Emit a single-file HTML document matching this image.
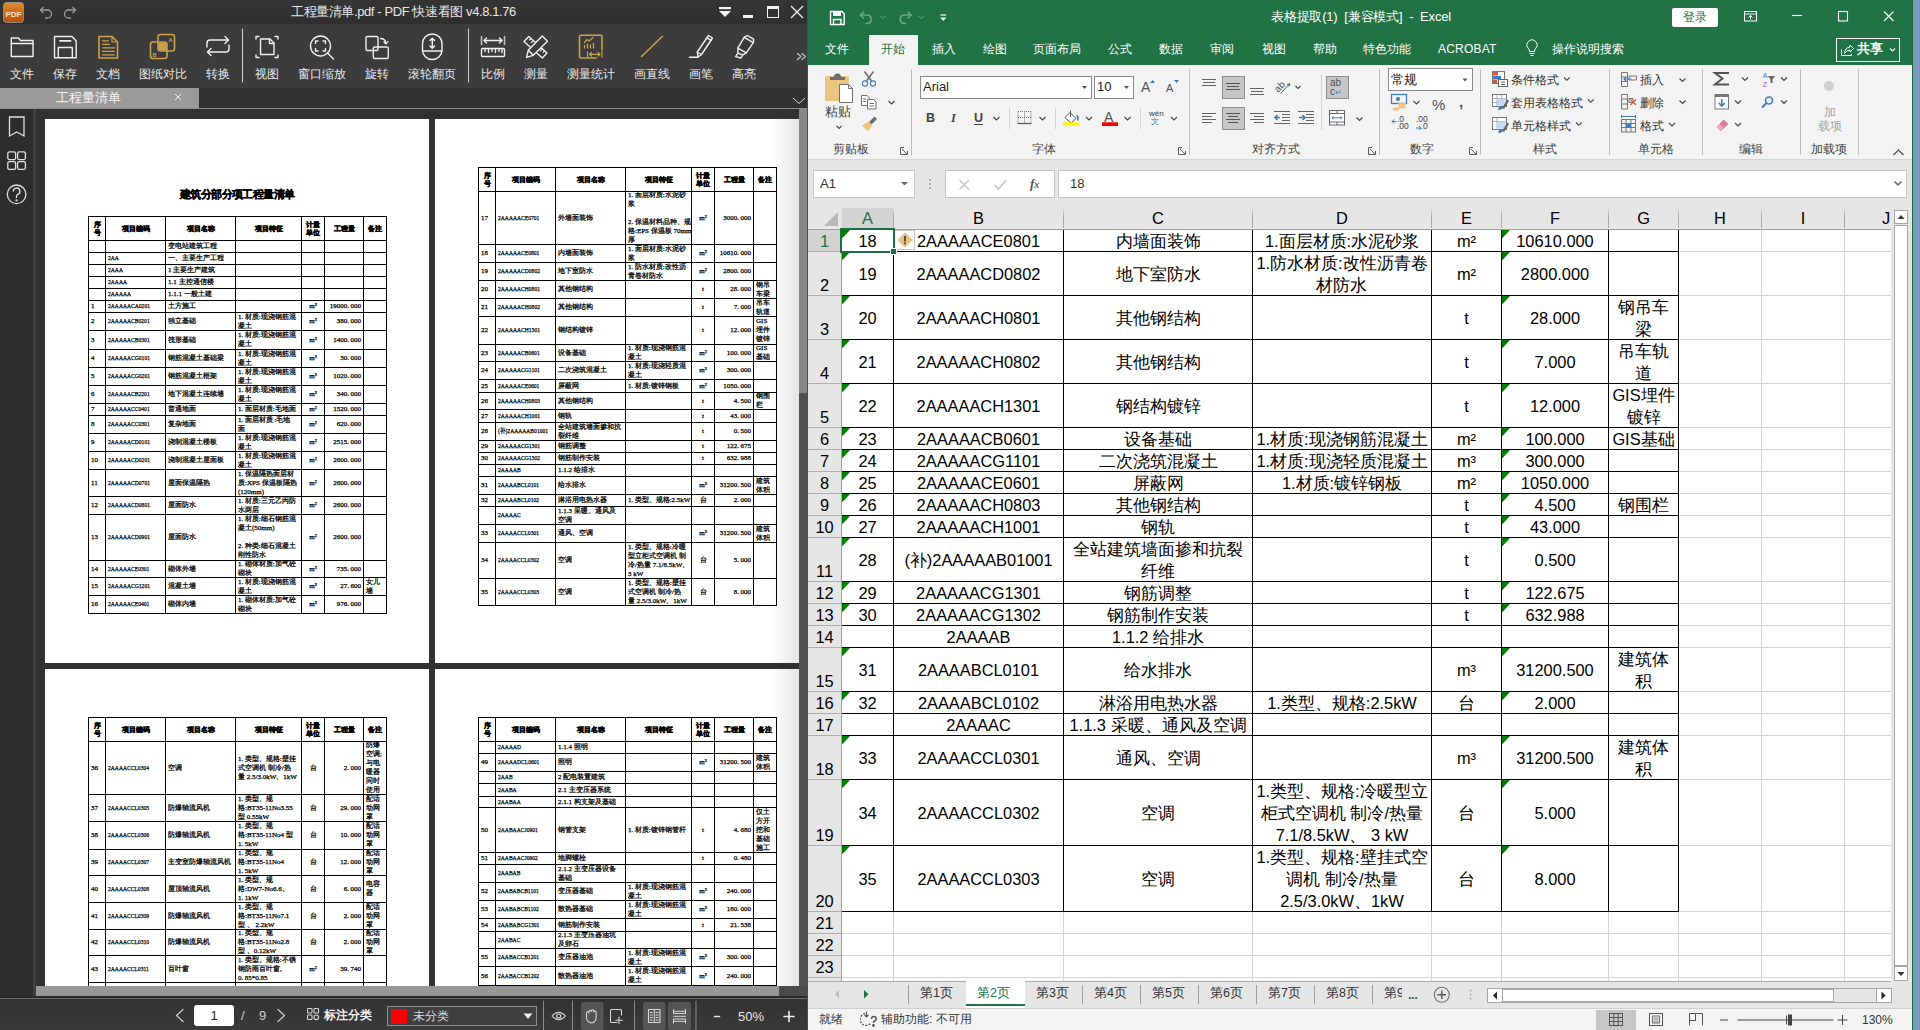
<!DOCTYPE html>
<html><head><meta charset="utf-8">
<style>
*{box-sizing:border-box;margin:0;padding:0}
html,body{width:1920px;height:1030px;overflow:hidden;background:#2f2f2f;font-family:"Liberation Sans",sans-serif}
.a{position:absolute}
.t{position:absolute;white-space:nowrap;line-height:1}
/* left window */
#pdf{position:absolute;left:0;top:0;width:807px;height:1030px;background:#313131;overflow:hidden}
#xl{position:absolute;left:807px;top:0;width:1113px;height:1030px;background:#f3f3f3;overflow:hidden}
.hd{font-size:16.4px;text-align:center;line-height:21px}
.rh{font-size:16.4px;text-align:center;line-height:21px}
.lbl{top:68px;font-size:12px;color:#e8e8e8}
.tab{top:43px;font-size:12px;color:#fff}
.rl{font-size:12px;color:#444}
.rb{font-size:12px;color:#333}
.stab{top:987px;font-size:12.5px;color:#333}
.ph{display:flex;align-items:center;justify-content:center;text-align:center;font-family:"Liberation Serif",serif;font-size:7px;line-height:8px;font-weight:bold;color:#000;white-space:nowrap;overflow:hidden}
.pc{display:flex;align-items:center;font-family:"Liberation Serif",serif;font-size:7px;line-height:9px;color:#000;white-space:nowrap;overflow:hidden;padding:0 2px}
.pc span{-webkit-text-stroke:0.25px #000}
.ph span{-webkit-text-stroke:0.4px #000}
.nx span{display:inline-block;transform:scaleX(.8);transform-origin:left center}
.nx.r span{transform-origin:right center}
.pc.l{justify-content:flex-start;text-align:left}
.pc.c{justify-content:center;text-align:center}
.pc.r{justify-content:flex-end;text-align:right}
.z{font-style:normal;font-size:17.2px}
.cell{display:flex;align-items:center;justify-content:center;text-align:center;font-size:16.4px;line-height:22px;color:#000;overflow:hidden;white-space:nowrap}
</style></head><body>
<div id="pdf">
  <div class="a" style="left:0;top:0;width:807px;height:24px;background:linear-gradient(#353535,#303030)"></div>
  <div class="a" style="left:0;top:24px;width:807px;height:64px;background:#3c3c3c"></div>
  <div class="a" style="left:0;top:88px;width:807px;height:20px;background:#313131"></div>
  <div class="a" style="left:0;top:88px;width:199px;height:20px;background:#9a9a9a"></div>
  <div class="a" style="left:0;top:108px;width:807px;height:1px;background:#8c8c8c"></div>
  <div class="a" style="left:0;top:109px;width:33px;height:890px;background:#2d2d2d"></div>
  <div class="a" style="left:33px;top:109px;width:3px;height:887px;background:#3f3f3f"></div>
  <!-- pages -->
  <div class="a" style="left:0;top:0;width:807px;height:1030px;clip-path:inset(109px 8px 44px 36px)">
  <div class="a" style="left:45px;top:119px;width:384px;height:544px;background:#fff"></div>
  <div class="a" style="left:435px;top:119px;width:364px;height:544px;background:#fff"></div>
  <div class="a" style="left:45px;top:669px;width:384px;height:317px;background:#fff"></div>
  <div class="a" style="left:435px;top:669px;width:364px;height:317px;background:#fff"></div>
<div class="a" style="left:88px;top:216px;width:1px;height:398px;background:#000"></div>
<div class="a" style="left:105px;top:216px;width:1px;height:398px;background:#000"></div>
<div class="a" style="left:165px;top:216px;width:1px;height:398px;background:#000"></div>
<div class="a" style="left:235px;top:216px;width:1px;height:398px;background:#000"></div>
<div class="a" style="left:301px;top:216px;width:1px;height:398px;background:#000"></div>
<div class="a" style="left:324px;top:216px;width:1px;height:398px;background:#000"></div>
<div class="a" style="left:363px;top:216px;width:1px;height:398px;background:#000"></div>
<div class="a" style="left:386px;top:216px;width:1px;height:398px;background:#000"></div>
<div class="a" style="left:88px;top:216px;width:299px;height:1px;background:#000"></div>
<div class="a" style="left:88px;top:240px;width:299px;height:1px;background:#000"></div>
<div class="a" style="left:88px;top:252px;width:299px;height:1px;background:#000"></div>
<div class="a" style="left:88px;top:264px;width:299px;height:1px;background:#000"></div>
<div class="a" style="left:88px;top:276px;width:299px;height:1px;background:#000"></div>
<div class="a" style="left:88px;top:288px;width:299px;height:1px;background:#000"></div>
<div class="a" style="left:88px;top:300px;width:299px;height:1px;background:#000"></div>
<div class="a" style="left:88px;top:312px;width:299px;height:1px;background:#000"></div>
<div class="a" style="left:88px;top:330px;width:299px;height:1px;background:#000"></div>
<div class="a" style="left:88px;top:349px;width:299px;height:1px;background:#000"></div>
<div class="a" style="left:88px;top:367px;width:299px;height:1px;background:#000"></div>
<div class="a" style="left:88px;top:385px;width:299px;height:1px;background:#000"></div>
<div class="a" style="left:88px;top:403px;width:299px;height:1px;background:#000"></div>
<div class="a" style="left:88px;top:415px;width:299px;height:1px;background:#000"></div>
<div class="a" style="left:88px;top:433px;width:299px;height:1px;background:#000"></div>
<div class="a" style="left:88px;top:451px;width:299px;height:1px;background:#000"></div>
<div class="a" style="left:88px;top:469px;width:299px;height:1px;background:#000"></div>
<div class="a" style="left:88px;top:496px;width:299px;height:1px;background:#000"></div>
<div class="a" style="left:88px;top:514px;width:299px;height:1px;background:#000"></div>
<div class="a" style="left:88px;top:560px;width:299px;height:1px;background:#000"></div>
<div class="a" style="left:88px;top:577px;width:299px;height:1px;background:#000"></div>
<div class="a" style="left:88px;top:595px;width:299px;height:1px;background:#000"></div>
<div class="a" style="left:88px;top:613px;width:299px;height:1px;background:#000"></div>
<div class="a" style="left:88px;top:216px;width:299px;height:1px;background:#000"></div>
<div class="a ph" style="left:89px;top:217px;width:16px;height:23px"><span>序<br>号</span></div>
<div class="a ph" style="left:106px;top:217px;width:59px;height:23px"><span>项目编码</span></div>
<div class="a ph" style="left:166px;top:217px;width:69px;height:23px"><span>项目名称</span></div>
<div class="a ph" style="left:236px;top:217px;width:65px;height:23px"><span>项目特征</span></div>
<div class="a ph" style="left:302px;top:217px;width:22px;height:23px"><span>计量<br>单位</span></div>
<div class="a ph" style="left:325px;top:217px;width:38px;height:23px"><span>工程量</span></div>
<div class="a ph" style="left:364px;top:217px;width:22px;height:23px"><span>备注</span></div>
<div class="a pc l" style="left:166px;top:241px;width:69px;height:11px"><span>变电站建筑工程</span></div>
<div class="a pc l nx" style="left:106px;top:253px;width:59px;height:11px"><span>2AA</span></div>
<div class="a pc l" style="left:166px;top:253px;width:69px;height:11px"><span>一、主要生产工程</span></div>
<div class="a pc l nx" style="left:106px;top:265px;width:59px;height:11px"><span>2AAA</span></div>
<div class="a pc l" style="left:166px;top:265px;width:69px;height:11px"><span>1 主要生产建筑</span></div>
<div class="a pc l nx" style="left:106px;top:277px;width:59px;height:11px"><span>2AAAA</span></div>
<div class="a pc l" style="left:166px;top:277px;width:69px;height:11px"><span>1.1 主控通信楼</span></div>
<div class="a pc l nx" style="left:106px;top:289px;width:59px;height:11px"><span>2AAAAA</span></div>
<div class="a pc l" style="left:166px;top:289px;width:69px;height:11px"><span>1.1.1 一般土建</span></div>
<div class="a pc l" style="left:89px;top:301px;width:16px;height:11px"><span>1</span></div>
<div class="a pc l nx" style="left:106px;top:301px;width:59px;height:11px"><span>2AAAAACA0201</span></div>
<div class="a pc l" style="left:166px;top:301px;width:69px;height:11px"><span>土方施工</span></div>
<div class="a pc c" style="left:302px;top:301px;width:22px;height:11px"><span>m³</span></div>
<div class="a pc r" style="left:325px;top:301px;width:38px;height:11px"><span>19000.&thinsp;000</span></div>
<div class="a pc l" style="left:89px;top:313px;width:16px;height:17px"><span>2</span></div>
<div class="a pc l nx" style="left:106px;top:313px;width:59px;height:17px"><span>2AAAAACB0201</span></div>
<div class="a pc l" style="left:166px;top:313px;width:69px;height:17px"><span>独立基础</span></div>
<div class="a pc l" style="left:236px;top:313px;width:65px;height:17px"><span>1.&thinsp;材质:现浇钢筋混<br>凝土</span></div>
<div class="a pc c" style="left:302px;top:313px;width:22px;height:17px"><span>m³</span></div>
<div class="a pc r" style="left:325px;top:313px;width:38px;height:17px"><span>380.&thinsp;000</span></div>
<div class="a pc l" style="left:89px;top:331px;width:16px;height:18px"><span>3</span></div>
<div class="a pc l nx" style="left:106px;top:331px;width:59px;height:18px"><span>2AAAAACB0301</span></div>
<div class="a pc l" style="left:166px;top:331px;width:69px;height:18px"><span>筏形基础</span></div>
<div class="a pc l" style="left:236px;top:331px;width:65px;height:18px"><span>1.&thinsp;材质:现浇钢筋混<br>凝土</span></div>
<div class="a pc c" style="left:302px;top:331px;width:22px;height:18px"><span>m³</span></div>
<div class="a pc r" style="left:325px;top:331px;width:38px;height:18px"><span>1400.&thinsp;000</span></div>
<div class="a pc l" style="left:89px;top:350px;width:16px;height:17px"><span>4</span></div>
<div class="a pc l nx" style="left:106px;top:350px;width:59px;height:17px"><span>2AAAAACG0101</span></div>
<div class="a pc l" style="left:166px;top:350px;width:69px;height:17px"><span>钢筋混凝土基础梁</span></div>
<div class="a pc l" style="left:236px;top:350px;width:65px;height:17px"><span>1.&thinsp;材质:现浇钢筋混<br>凝土</span></div>
<div class="a pc c" style="left:302px;top:350px;width:22px;height:17px"><span>m³</span></div>
<div class="a pc r" style="left:325px;top:350px;width:38px;height:17px"><span>30.&thinsp;000</span></div>
<div class="a pc l" style="left:89px;top:368px;width:16px;height:17px"><span>5</span></div>
<div class="a pc l nx" style="left:106px;top:368px;width:59px;height:17px"><span>2AAAAACG0201</span></div>
<div class="a pc l" style="left:166px;top:368px;width:69px;height:17px"><span>钢筋混凝土框架</span></div>
<div class="a pc l" style="left:236px;top:368px;width:65px;height:17px"><span>1.&thinsp;材质:现浇钢筋混<br>凝土</span></div>
<div class="a pc c" style="left:302px;top:368px;width:22px;height:17px"><span>m³</span></div>
<div class="a pc r" style="left:325px;top:368px;width:38px;height:17px"><span>1020.&thinsp;000</span></div>
<div class="a pc l" style="left:89px;top:386px;width:16px;height:17px"><span>6</span></div>
<div class="a pc l nx" style="left:106px;top:386px;width:59px;height:17px"><span>2AAAAACB2201</span></div>
<div class="a pc l" style="left:166px;top:386px;width:69px;height:17px"><span>地下混凝土连续墙</span></div>
<div class="a pc l" style="left:236px;top:386px;width:65px;height:17px"><span>1.&thinsp;材质:现浇钢筋混<br>凝土</span></div>
<div class="a pc c" style="left:302px;top:386px;width:22px;height:17px"><span>m³</span></div>
<div class="a pc r" style="left:325px;top:386px;width:38px;height:17px"><span>340.&thinsp;000</span></div>
<div class="a pc l" style="left:89px;top:404px;width:16px;height:11px"><span>7</span></div>
<div class="a pc l nx" style="left:106px;top:404px;width:59px;height:11px"><span>2AAAAACC0401</span></div>
<div class="a pc l" style="left:166px;top:404px;width:69px;height:11px"><span>普通地面</span></div>
<div class="a pc l" style="left:236px;top:404px;width:65px;height:11px"><span>1.&thinsp;面层材质:毛地面</span></div>
<div class="a pc c" style="left:302px;top:404px;width:22px;height:11px"><span>m²</span></div>
<div class="a pc r" style="left:325px;top:404px;width:38px;height:11px"><span>1520.&thinsp;000</span></div>
<div class="a pc l" style="left:89px;top:416px;width:16px;height:17px"><span>8</span></div>
<div class="a pc l nx" style="left:106px;top:416px;width:59px;height:17px"><span>2AAAAACC0301</span></div>
<div class="a pc l" style="left:166px;top:416px;width:69px;height:17px"><span>复杂地面</span></div>
<div class="a pc l" style="left:236px;top:416px;width:65px;height:17px"><span>1.&thinsp;面层材质 :毛地<br>面</span></div>
<div class="a pc c" style="left:302px;top:416px;width:22px;height:17px"><span>m²</span></div>
<div class="a pc r" style="left:325px;top:416px;width:38px;height:17px"><span>620.&thinsp;000</span></div>
<div class="a pc l" style="left:89px;top:434px;width:16px;height:17px"><span>9</span></div>
<div class="a pc l nx" style="left:106px;top:434px;width:59px;height:17px"><span>2AAAAACD0101</span></div>
<div class="a pc l" style="left:166px;top:434px;width:69px;height:17px"><span>浇制混凝土楼板</span></div>
<div class="a pc l" style="left:236px;top:434px;width:65px;height:17px"><span>1.&thinsp;材质:现浇钢筋混<br>凝土</span></div>
<div class="a pc c" style="left:302px;top:434px;width:22px;height:17px"><span>m²</span></div>
<div class="a pc r" style="left:325px;top:434px;width:38px;height:17px"><span>2515.&thinsp;000</span></div>
<div class="a pc l" style="left:89px;top:452px;width:16px;height:17px"><span>10</span></div>
<div class="a pc l nx" style="left:106px;top:452px;width:59px;height:17px"><span>2AAAAACD0201</span></div>
<div class="a pc l" style="left:166px;top:452px;width:69px;height:17px"><span>浇制混凝土屋面板</span></div>
<div class="a pc l" style="left:236px;top:452px;width:65px;height:17px"><span>1.&thinsp;材质:现浇钢筋混<br>凝土</span></div>
<div class="a pc c" style="left:302px;top:452px;width:22px;height:17px"><span>m²</span></div>
<div class="a pc r" style="left:325px;top:452px;width:38px;height:17px"><span>2600.&thinsp;000</span></div>
<div class="a pc l" style="left:89px;top:470px;width:16px;height:26px"><span>11</span></div>
<div class="a pc l nx" style="left:106px;top:470px;width:59px;height:26px"><span>2AAAAACD0701</span></div>
<div class="a pc l" style="left:166px;top:470px;width:69px;height:26px"><span>屋面保温隔热</span></div>
<div class="a pc l" style="left:236px;top:470px;width:65px;height:26px"><span>1.&thinsp;保温隔热面层材<br>质:XPS 保温板隔热<br>(120mm)</span></div>
<div class="a pc c" style="left:302px;top:470px;width:22px;height:26px"><span>m²</span></div>
<div class="a pc r" style="left:325px;top:470px;width:38px;height:26px"><span>2600.&thinsp;000</span></div>
<div class="a pc l" style="left:89px;top:497px;width:16px;height:17px"><span>12</span></div>
<div class="a pc l nx" style="left:106px;top:497px;width:59px;height:17px"><span>2AAAAACD0801</span></div>
<div class="a pc l" style="left:166px;top:497px;width:69px;height:17px"><span>屋面防水</span></div>
<div class="a pc l" style="left:236px;top:497px;width:65px;height:17px"><span>1.&thinsp;材质:三元乙丙防<br>水两层</span></div>
<div class="a pc c" style="left:302px;top:497px;width:22px;height:17px"><span>m²</span></div>
<div class="a pc r" style="left:325px;top:497px;width:38px;height:17px"><span>2600.&thinsp;000</span></div>
<div class="a pc l" style="left:89px;top:515px;width:16px;height:45px"><span>13</span></div>
<div class="a pc l nx" style="left:106px;top:515px;width:59px;height:45px"><span>2AAAAACD0901</span></div>
<div class="a pc l" style="left:166px;top:515px;width:69px;height:45px"><span>屋面防水</span></div>
<div class="a pc l" style="left:236px;top:515px;width:65px;height:45px"><span>1.&thinsp;材质:细石钢筋混<br>凝土(50mm)<br>&nbsp;<br>2.&thinsp;种类:细石混凝土<br>刚性防水</span></div>
<div class="a pc c" style="left:302px;top:515px;width:22px;height:45px"><span>m²</span></div>
<div class="a pc r" style="left:325px;top:515px;width:38px;height:45px"><span>2600.&thinsp;000</span></div>
<div class="a pc l" style="left:89px;top:561px;width:16px;height:16px"><span>14</span></div>
<div class="a pc l nx" style="left:106px;top:561px;width:59px;height:16px"><span>2AAAAACE0301</span></div>
<div class="a pc l" style="left:166px;top:561px;width:69px;height:16px"><span>砌体外墙</span></div>
<div class="a pc l" style="left:236px;top:561px;width:65px;height:16px"><span>1.&thinsp;砌体材质:加气砼<br>砌块</span></div>
<div class="a pc c" style="left:302px;top:561px;width:22px;height:16px"><span>m³</span></div>
<div class="a pc r" style="left:325px;top:561px;width:38px;height:16px"><span>735.&thinsp;000</span></div>
<div class="a pc l" style="left:89px;top:578px;width:16px;height:17px"><span>15</span></div>
<div class="a pc l nx" style="left:106px;top:578px;width:59px;height:17px"><span>2AAAAACG1201</span></div>
<div class="a pc l" style="left:166px;top:578px;width:69px;height:17px"><span>混凝土墙</span></div>
<div class="a pc l" style="left:236px;top:578px;width:65px;height:17px"><span>1.&thinsp;材质:现浇钢筋混<br>凝土</span></div>
<div class="a pc c" style="left:302px;top:578px;width:22px;height:17px"><span>m³</span></div>
<div class="a pc r" style="left:325px;top:578px;width:38px;height:17px"><span>27.&thinsp;600</span></div>
<div class="a pc l" style="left:364px;top:578px;width:22px;height:17px"><span>女儿<br>墙</span></div>
<div class="a pc l" style="left:89px;top:596px;width:16px;height:17px"><span>16</span></div>
<div class="a pc l nx" style="left:106px;top:596px;width:59px;height:17px"><span>2AAAAACE0401</span></div>
<div class="a pc l" style="left:166px;top:596px;width:69px;height:17px"><span>砌体内墙</span></div>
<div class="a pc l" style="left:236px;top:596px;width:65px;height:17px"><span>1.&thinsp;砌体材质:加气砼<br>砌块</span></div>
<div class="a pc c" style="left:302px;top:596px;width:22px;height:17px"><span>m³</span></div>
<div class="a pc r" style="left:325px;top:596px;width:38px;height:17px"><span>976.&thinsp;000</span></div>
<div class="t" style="left:180px;top:189px;font-size:10.5px;font-weight:bold;color:#000;letter-spacing:-0.6px;-webkit-text-stroke:0.3px #000">建筑分部分项工程量清单</div>
<div class="a" style="left:478px;top:167px;width:1px;height:439px;background:#000"></div>
<div class="a" style="left:495px;top:167px;width:1px;height:439px;background:#000"></div>
<div class="a" style="left:555px;top:167px;width:1px;height:439px;background:#000"></div>
<div class="a" style="left:625px;top:167px;width:1px;height:439px;background:#000"></div>
<div class="a" style="left:691px;top:167px;width:1px;height:439px;background:#000"></div>
<div class="a" style="left:714px;top:167px;width:1px;height:439px;background:#000"></div>
<div class="a" style="left:753px;top:167px;width:1px;height:439px;background:#000"></div>
<div class="a" style="left:776px;top:167px;width:1px;height:439px;background:#000"></div>
<div class="a" style="left:478px;top:167px;width:299px;height:1px;background:#000"></div>
<div class="a" style="left:478px;top:191px;width:299px;height:1px;background:#000"></div>
<div class="a" style="left:478px;top:244px;width:299px;height:1px;background:#000"></div>
<div class="a" style="left:478px;top:262px;width:299px;height:1px;background:#000"></div>
<div class="a" style="left:478px;top:280px;width:299px;height:1px;background:#000"></div>
<div class="a" style="left:478px;top:298px;width:299px;height:1px;background:#000"></div>
<div class="a" style="left:478px;top:316px;width:299px;height:1px;background:#000"></div>
<div class="a" style="left:478px;top:344px;width:299px;height:1px;background:#000"></div>
<div class="a" style="left:478px;top:361px;width:299px;height:1px;background:#000"></div>
<div class="a" style="left:478px;top:379px;width:299px;height:1px;background:#000"></div>
<div class="a" style="left:478px;top:392px;width:299px;height:1px;background:#000"></div>
<div class="a" style="left:478px;top:409px;width:299px;height:1px;background:#000"></div>
<div class="a" style="left:478px;top:422px;width:299px;height:1px;background:#000"></div>
<div class="a" style="left:478px;top:440px;width:299px;height:1px;background:#000"></div>
<div class="a" style="left:478px;top:452px;width:299px;height:1px;background:#000"></div>
<div class="a" style="left:478px;top:464px;width:299px;height:1px;background:#000"></div>
<div class="a" style="left:478px;top:476px;width:299px;height:1px;background:#000"></div>
<div class="a" style="left:478px;top:494px;width:299px;height:1px;background:#000"></div>
<div class="a" style="left:478px;top:506px;width:299px;height:1px;background:#000"></div>
<div class="a" style="left:478px;top:524px;width:299px;height:1px;background:#000"></div>
<div class="a" style="left:478px;top:542px;width:299px;height:1px;background:#000"></div>
<div class="a" style="left:478px;top:578px;width:299px;height:1px;background:#000"></div>
<div class="a" style="left:478px;top:605px;width:299px;height:1px;background:#000"></div>
<div class="a" style="left:478px;top:167px;width:299px;height:1px;background:#000"></div>
<div class="a ph" style="left:479px;top:168px;width:16px;height:23px"><span>序<br>号</span></div>
<div class="a ph" style="left:496px;top:168px;width:59px;height:23px"><span>项目编码</span></div>
<div class="a ph" style="left:556px;top:168px;width:69px;height:23px"><span>项目名称</span></div>
<div class="a ph" style="left:626px;top:168px;width:65px;height:23px"><span>项目特征</span></div>
<div class="a ph" style="left:692px;top:168px;width:22px;height:23px"><span>计量<br>单位</span></div>
<div class="a ph" style="left:715px;top:168px;width:38px;height:23px"><span>工程量</span></div>
<div class="a ph" style="left:754px;top:168px;width:22px;height:23px"><span>备注</span></div>
<div class="a pc l" style="left:479px;top:192px;width:16px;height:52px"><span>17</span></div>
<div class="a pc l nx" style="left:496px;top:192px;width:59px;height:52px"><span>2AAAAACE0701</span></div>
<div class="a pc l" style="left:556px;top:192px;width:69px;height:52px"><span>外墙面装饰</span></div>
<div class="a pc l" style="left:626px;top:192px;width:65px;height:52px"><span>1.&thinsp;面层材质:水泥砂<br>浆<br>&nbsp;<br>2.&thinsp;保温材料品种、规<br>格:EPS 保温板 70mm<br>厚</span></div>
<div class="a pc c" style="left:692px;top:192px;width:22px;height:52px"><span>m²</span></div>
<div class="a pc r" style="left:715px;top:192px;width:38px;height:52px"><span>3000.&thinsp;000</span></div>
<div class="a pc l" style="left:479px;top:245px;width:16px;height:17px"><span>18</span></div>
<div class="a pc l nx" style="left:496px;top:245px;width:59px;height:17px"><span>2AAAAACE0801</span></div>
<div class="a pc l" style="left:556px;top:245px;width:69px;height:17px"><span>内墙面装饰</span></div>
<div class="a pc l" style="left:626px;top:245px;width:65px;height:17px"><span>1.&thinsp;面层材质:水泥砂<br>浆</span></div>
<div class="a pc c" style="left:692px;top:245px;width:22px;height:17px"><span>m²</span></div>
<div class="a pc r" style="left:715px;top:245px;width:38px;height:17px"><span>10610.&thinsp;000</span></div>
<div class="a pc l" style="left:479px;top:263px;width:16px;height:17px"><span>19</span></div>
<div class="a pc l nx" style="left:496px;top:263px;width:59px;height:17px"><span>2AAAAACD0802</span></div>
<div class="a pc l" style="left:556px;top:263px;width:69px;height:17px"><span>地下室防水</span></div>
<div class="a pc l" style="left:626px;top:263px;width:65px;height:17px"><span>1.&thinsp;防水材质:改性沥<br>青卷材防水</span></div>
<div class="a pc c" style="left:692px;top:263px;width:22px;height:17px"><span>m²</span></div>
<div class="a pc r" style="left:715px;top:263px;width:38px;height:17px"><span>2800.&thinsp;000</span></div>
<div class="a pc l" style="left:479px;top:281px;width:16px;height:17px"><span>20</span></div>
<div class="a pc l nx" style="left:496px;top:281px;width:59px;height:17px"><span>2AAAAACH0801</span></div>
<div class="a pc l" style="left:556px;top:281px;width:69px;height:17px"><span>其他钢结构</span></div>
<div class="a pc c" style="left:692px;top:281px;width:22px;height:17px"><span>t</span></div>
<div class="a pc r" style="left:715px;top:281px;width:38px;height:17px"><span>28.&thinsp;000</span></div>
<div class="a pc l" style="left:754px;top:281px;width:22px;height:17px"><span>钢吊<br>车梁</span></div>
<div class="a pc l" style="left:479px;top:299px;width:16px;height:17px"><span>21</span></div>
<div class="a pc l nx" style="left:496px;top:299px;width:59px;height:17px"><span>2AAAAACH0802</span></div>
<div class="a pc l" style="left:556px;top:299px;width:69px;height:17px"><span>其他钢结构</span></div>
<div class="a pc c" style="left:692px;top:299px;width:22px;height:17px"><span>t</span></div>
<div class="a pc r" style="left:715px;top:299px;width:38px;height:17px"><span>7.&thinsp;000</span></div>
<div class="a pc l" style="left:754px;top:299px;width:22px;height:17px"><span>吊车<br>轨道</span></div>
<div class="a pc l" style="left:479px;top:317px;width:16px;height:27px"><span>22</span></div>
<div class="a pc l nx" style="left:496px;top:317px;width:59px;height:27px"><span>2AAAAACH1301</span></div>
<div class="a pc l" style="left:556px;top:317px;width:69px;height:27px"><span>钢结构镀锌</span></div>
<div class="a pc c" style="left:692px;top:317px;width:22px;height:27px"><span>t</span></div>
<div class="a pc r" style="left:715px;top:317px;width:38px;height:27px"><span>12.&thinsp;000</span></div>
<div class="a pc l" style="left:754px;top:317px;width:22px;height:27px"><span>GIS<br>埋件<br>镀锌</span></div>
<div class="a pc l" style="left:479px;top:345px;width:16px;height:16px"><span>23</span></div>
<div class="a pc l nx" style="left:496px;top:345px;width:59px;height:16px"><span>2AAAAACB0601</span></div>
<div class="a pc l" style="left:556px;top:345px;width:69px;height:16px"><span>设备基础</span></div>
<div class="a pc l" style="left:626px;top:345px;width:65px;height:16px"><span>1.&thinsp;材质:现浇钢筋混<br>凝土</span></div>
<div class="a pc c" style="left:692px;top:345px;width:22px;height:16px"><span>m²</span></div>
<div class="a pc r" style="left:715px;top:345px;width:38px;height:16px"><span>100.&thinsp;000</span></div>
<div class="a pc l" style="left:754px;top:345px;width:22px;height:16px"><span>GIS<br>基础</span></div>
<div class="a pc l" style="left:479px;top:362px;width:16px;height:17px"><span>24</span></div>
<div class="a pc l nx" style="left:496px;top:362px;width:59px;height:17px"><span>2AAAAACG1101</span></div>
<div class="a pc l" style="left:556px;top:362px;width:69px;height:17px"><span>二次浇筑混凝土</span></div>
<div class="a pc l" style="left:626px;top:362px;width:65px;height:17px"><span>1.&thinsp;材质:现浇轻质混<br>凝土</span></div>
<div class="a pc c" style="left:692px;top:362px;width:22px;height:17px"><span>m³</span></div>
<div class="a pc r" style="left:715px;top:362px;width:38px;height:17px"><span>300.&thinsp;000</span></div>
<div class="a pc l" style="left:479px;top:380px;width:16px;height:12px"><span>25</span></div>
<div class="a pc l nx" style="left:496px;top:380px;width:59px;height:12px"><span>2AAAAACE0601</span></div>
<div class="a pc l" style="left:556px;top:380px;width:69px;height:12px"><span>屏蔽网</span></div>
<div class="a pc l" style="left:626px;top:380px;width:65px;height:12px"><span>1.&thinsp;材质:镀锌钢板</span></div>
<div class="a pc c" style="left:692px;top:380px;width:22px;height:12px"><span>m²</span></div>
<div class="a pc r" style="left:715px;top:380px;width:38px;height:12px"><span>1050.&thinsp;000</span></div>
<div class="a pc l" style="left:479px;top:393px;width:16px;height:16px"><span>26</span></div>
<div class="a pc l nx" style="left:496px;top:393px;width:59px;height:16px"><span>2AAAAACH0803</span></div>
<div class="a pc l" style="left:556px;top:393px;width:69px;height:16px"><span>其他钢结构</span></div>
<div class="a pc c" style="left:692px;top:393px;width:22px;height:16px"><span>t</span></div>
<div class="a pc r" style="left:715px;top:393px;width:38px;height:16px"><span>4.&thinsp;500</span></div>
<div class="a pc l" style="left:754px;top:393px;width:22px;height:16px"><span>钢围<br>栏</span></div>
<div class="a pc l" style="left:479px;top:410px;width:16px;height:12px"><span>27</span></div>
<div class="a pc l nx" style="left:496px;top:410px;width:59px;height:12px"><span>2AAAAACH1001</span></div>
<div class="a pc l" style="left:556px;top:410px;width:69px;height:12px"><span>钢轨</span></div>
<div class="a pc c" style="left:692px;top:410px;width:22px;height:12px"><span>t</span></div>
<div class="a pc r" style="left:715px;top:410px;width:38px;height:12px"><span>43.&thinsp;000</span></div>
<div class="a pc l" style="left:479px;top:423px;width:16px;height:17px"><span>28</span></div>
<div class="a pc l nx" style="left:496px;top:423px;width:59px;height:17px"><span>(补)2AAAAAB01001</span></div>
<div class="a pc l" style="left:556px;top:423px;width:69px;height:17px"><span>全站建筑墙面掺和抗<br>裂纤维</span></div>
<div class="a pc c" style="left:692px;top:423px;width:22px;height:17px"><span>t</span></div>
<div class="a pc r" style="left:715px;top:423px;width:38px;height:17px"><span>0.&thinsp;500</span></div>
<div class="a pc l" style="left:479px;top:441px;width:16px;height:11px"><span>29</span></div>
<div class="a pc l nx" style="left:496px;top:441px;width:59px;height:11px"><span>2AAAAACG1301</span></div>
<div class="a pc l" style="left:556px;top:441px;width:69px;height:11px"><span>钢筋调整</span></div>
<div class="a pc c" style="left:692px;top:441px;width:22px;height:11px"><span>t</span></div>
<div class="a pc r" style="left:715px;top:441px;width:38px;height:11px"><span>122.&thinsp;675</span></div>
<div class="a pc l" style="left:479px;top:453px;width:16px;height:11px"><span>30</span></div>
<div class="a pc l nx" style="left:496px;top:453px;width:59px;height:11px"><span>2AAAAACG1302</span></div>
<div class="a pc l" style="left:556px;top:453px;width:69px;height:11px"><span>钢筋制作安装</span></div>
<div class="a pc c" style="left:692px;top:453px;width:22px;height:11px"><span>t</span></div>
<div class="a pc r" style="left:715px;top:453px;width:38px;height:11px"><span>632.&thinsp;988</span></div>
<div class="a pc l nx" style="left:496px;top:465px;width:59px;height:11px"><span>2AAAAB</span></div>
<div class="a pc l" style="left:556px;top:465px;width:69px;height:11px"><span>1.1.2 给排水</span></div>
<div class="a pc l" style="left:479px;top:477px;width:16px;height:17px"><span>31</span></div>
<div class="a pc l nx" style="left:496px;top:477px;width:59px;height:17px"><span>2AAAABCL0101</span></div>
<div class="a pc l" style="left:556px;top:477px;width:69px;height:17px"><span>给水排水</span></div>
<div class="a pc c" style="left:692px;top:477px;width:22px;height:17px"><span>m³</span></div>
<div class="a pc r" style="left:715px;top:477px;width:38px;height:17px"><span>31200.&thinsp;500</span></div>
<div class="a pc l" style="left:754px;top:477px;width:22px;height:17px"><span>建筑<br>体积</span></div>
<div class="a pc l" style="left:479px;top:495px;width:16px;height:11px"><span>32</span></div>
<div class="a pc l nx" style="left:496px;top:495px;width:59px;height:11px"><span>2AAAABCL0102</span></div>
<div class="a pc l" style="left:556px;top:495px;width:69px;height:11px"><span>淋浴用电热水器</span></div>
<div class="a pc l" style="left:626px;top:495px;width:65px;height:11px"><span>1.&thinsp;类型、规格:2.5kW</span></div>
<div class="a pc c" style="left:692px;top:495px;width:22px;height:11px"><span>台</span></div>
<div class="a pc r" style="left:715px;top:495px;width:38px;height:11px"><span>2.&thinsp;000</span></div>
<div class="a pc l nx" style="left:496px;top:507px;width:59px;height:17px"><span>2AAAAC</span></div>
<div class="a pc l" style="left:556px;top:507px;width:69px;height:17px"><span>1.1.3 采暖、通风及<br>空调</span></div>
<div class="a pc l" style="left:479px;top:525px;width:16px;height:17px"><span>33</span></div>
<div class="a pc l nx" style="left:496px;top:525px;width:59px;height:17px"><span>2AAAACCL0301</span></div>
<div class="a pc l" style="left:556px;top:525px;width:69px;height:17px"><span>通风、空调</span></div>
<div class="a pc c" style="left:692px;top:525px;width:22px;height:17px"><span>m³</span></div>
<div class="a pc r" style="left:715px;top:525px;width:38px;height:17px"><span>31200.&thinsp;500</span></div>
<div class="a pc l" style="left:754px;top:525px;width:22px;height:17px"><span>建筑<br>体积</span></div>
<div class="a pc l" style="left:479px;top:543px;width:16px;height:35px"><span>34</span></div>
<div class="a pc l nx" style="left:496px;top:543px;width:59px;height:35px"><span>2AAAACCL0302</span></div>
<div class="a pc l" style="left:556px;top:543px;width:69px;height:35px"><span>空调</span></div>
<div class="a pc l" style="left:626px;top:543px;width:65px;height:35px"><span>1.&thinsp;类型、规格:冷暖<br>型立柜式空调机 制<br>冷/热量 7.1/8.5kW、<br>3 kW</span></div>
<div class="a pc c" style="left:692px;top:543px;width:22px;height:35px"><span>台</span></div>
<div class="a pc r" style="left:715px;top:543px;width:38px;height:35px"><span>5.&thinsp;000</span></div>
<div class="a pc l" style="left:479px;top:579px;width:16px;height:26px"><span>35</span></div>
<div class="a pc l nx" style="left:496px;top:579px;width:59px;height:26px"><span>2AAAACCL0303</span></div>
<div class="a pc l" style="left:556px;top:579px;width:69px;height:26px"><span>空调</span></div>
<div class="a pc l" style="left:626px;top:579px;width:65px;height:26px"><span>1.&thinsp;类型、规格:壁挂<br>式空调机 制冷/热<br>量 2.5/3.0kW、1kW</span></div>
<div class="a pc c" style="left:692px;top:579px;width:22px;height:26px"><span>台</span></div>
<div class="a pc r" style="left:715px;top:579px;width:38px;height:26px"><span>8.&thinsp;000</span></div>
<div class="a" style="left:88px;top:717px;width:1px;height:294px;background:#000"></div>
<div class="a" style="left:105px;top:717px;width:1px;height:294px;background:#000"></div>
<div class="a" style="left:165px;top:717px;width:1px;height:294px;background:#000"></div>
<div class="a" style="left:235px;top:717px;width:1px;height:294px;background:#000"></div>
<div class="a" style="left:301px;top:717px;width:1px;height:294px;background:#000"></div>
<div class="a" style="left:324px;top:717px;width:1px;height:294px;background:#000"></div>
<div class="a" style="left:363px;top:717px;width:1px;height:294px;background:#000"></div>
<div class="a" style="left:386px;top:717px;width:1px;height:294px;background:#000"></div>
<div class="a" style="left:88px;top:717px;width:299px;height:1px;background:#000"></div>
<div class="a" style="left:88px;top:741px;width:299px;height:1px;background:#000"></div>
<div class="a" style="left:88px;top:794px;width:299px;height:1px;background:#000"></div>
<div class="a" style="left:88px;top:821px;width:299px;height:1px;background:#000"></div>
<div class="a" style="left:88px;top:849px;width:299px;height:1px;background:#000"></div>
<div class="a" style="left:88px;top:875px;width:299px;height:1px;background:#000"></div>
<div class="a" style="left:88px;top:902px;width:299px;height:1px;background:#000"></div>
<div class="a" style="left:88px;top:929px;width:299px;height:1px;background:#000"></div>
<div class="a" style="left:88px;top:955px;width:299px;height:1px;background:#000"></div>
<div class="a" style="left:88px;top:982px;width:299px;height:1px;background:#000"></div>
<div class="a" style="left:88px;top:1010px;width:299px;height:1px;background:#000"></div>
<div class="a" style="left:88px;top:717px;width:299px;height:1px;background:#000"></div>
<div class="a ph" style="left:89px;top:718px;width:16px;height:23px"><span>序<br>号</span></div>
<div class="a ph" style="left:106px;top:718px;width:59px;height:23px"><span>项目编码</span></div>
<div class="a ph" style="left:166px;top:718px;width:69px;height:23px"><span>项目名称</span></div>
<div class="a ph" style="left:236px;top:718px;width:65px;height:23px"><span>项目特征</span></div>
<div class="a ph" style="left:302px;top:718px;width:22px;height:23px"><span>计量<br>单位</span></div>
<div class="a ph" style="left:325px;top:718px;width:38px;height:23px"><span>工程量</span></div>
<div class="a ph" style="left:364px;top:718px;width:22px;height:23px"><span>备注</span></div>
<div class="a pc l" style="left:89px;top:742px;width:16px;height:52px"><span>36</span></div>
<div class="a pc l nx" style="left:106px;top:742px;width:59px;height:52px"><span>2AAAACCL0304</span></div>
<div class="a pc l" style="left:166px;top:742px;width:69px;height:52px"><span>空调</span></div>
<div class="a pc l" style="left:236px;top:742px;width:65px;height:52px"><span>1.&thinsp;类型、规格:壁挂<br>式空调机 制冷/热<br>量 2.5/3.0kW、1kW</span></div>
<div class="a pc c" style="left:302px;top:742px;width:22px;height:52px"><span>台</span></div>
<div class="a pc r" style="left:325px;top:742px;width:38px;height:52px"><span>2.&thinsp;000</span></div>
<div class="a pc l" style="left:364px;top:742px;width:22px;height:52px"><span>防爆<br>空调;<br>与电<br>暖器<br>同时<br>使用</span></div>
<div class="a pc l" style="left:89px;top:795px;width:16px;height:26px"><span>37</span></div>
<div class="a pc l nx" style="left:106px;top:795px;width:59px;height:26px"><span>2AAAACCL0305</span></div>
<div class="a pc l" style="left:166px;top:795px;width:69px;height:26px"><span>防爆轴流风机</span></div>
<div class="a pc l" style="left:236px;top:795px;width:65px;height:26px"><span>1.&thinsp;类型、规<br>格:BT35-11No3.55<br>型 0.55kW</span></div>
<div class="a pc c" style="left:302px;top:795px;width:22px;height:26px"><span>台</span></div>
<div class="a pc r" style="left:325px;top:795px;width:38px;height:26px"><span>29.&thinsp;000</span></div>
<div class="a pc l" style="left:364px;top:795px;width:22px;height:26px"><span>配话<br>动网<br>罩</span></div>
<div class="a pc l" style="left:89px;top:822px;width:16px;height:27px"><span>38</span></div>
<div class="a pc l nx" style="left:106px;top:822px;width:59px;height:27px"><span>2AAAACCL0306</span></div>
<div class="a pc l" style="left:166px;top:822px;width:69px;height:27px"><span>防爆轴流风机</span></div>
<div class="a pc l" style="left:236px;top:822px;width:65px;height:27px"><span>1.&thinsp;类型、规<br>格:BT35-11No4 型<br>1.&thinsp;5kW</span></div>
<div class="a pc c" style="left:302px;top:822px;width:22px;height:27px"><span>台</span></div>
<div class="a pc r" style="left:325px;top:822px;width:38px;height:27px"><span>10.&thinsp;000</span></div>
<div class="a pc l" style="left:364px;top:822px;width:22px;height:27px"><span>配话<br>动网<br>罩</span></div>
<div class="a pc l" style="left:89px;top:850px;width:16px;height:25px"><span>39</span></div>
<div class="a pc l nx" style="left:106px;top:850px;width:59px;height:25px"><span>2AAAACCL0307</span></div>
<div class="a pc l" style="left:166px;top:850px;width:69px;height:25px"><span>主变室防爆轴流风机</span></div>
<div class="a pc l" style="left:236px;top:850px;width:65px;height:25px"><span>1.&thinsp;类型、规<br>格:BT35-11No4<br>1.&thinsp;5kW</span></div>
<div class="a pc c" style="left:302px;top:850px;width:22px;height:25px"><span>台</span></div>
<div class="a pc r" style="left:325px;top:850px;width:38px;height:25px"><span>12.&thinsp;000</span></div>
<div class="a pc l" style="left:364px;top:850px;width:22px;height:25px"><span>配话<br>动网<br>罩</span></div>
<div class="a pc l" style="left:89px;top:876px;width:16px;height:26px"><span>40</span></div>
<div class="a pc l nx" style="left:106px;top:876px;width:59px;height:26px"><span>2AAAACCL0308</span></div>
<div class="a pc l" style="left:166px;top:876px;width:69px;height:26px"><span>屋顶轴流风机</span></div>
<div class="a pc l" style="left:236px;top:876px;width:65px;height:26px"><span>1.&thinsp;类型、规<br>格:DW7-No6.6、<br>1.&thinsp;1kW</span></div>
<div class="a pc c" style="left:302px;top:876px;width:22px;height:26px"><span>台</span></div>
<div class="a pc r" style="left:325px;top:876px;width:38px;height:26px"><span>6.&thinsp;000</span></div>
<div class="a pc l" style="left:364px;top:876px;width:22px;height:26px"><span>电容<br>器</span></div>
<div class="a pc l" style="left:89px;top:903px;width:16px;height:26px"><span>41</span></div>
<div class="a pc l nx" style="left:106px;top:903px;width:59px;height:26px"><span>2AAAACCL0309</span></div>
<div class="a pc l" style="left:166px;top:903px;width:69px;height:26px"><span>防爆轴流风机</span></div>
<div class="a pc l" style="left:236px;top:903px;width:65px;height:26px"><span>1.&thinsp;类型、规<br>格:BT35-11No7.1<br>型 、 2.2kW</span></div>
<div class="a pc c" style="left:302px;top:903px;width:22px;height:26px"><span>台</span></div>
<div class="a pc r" style="left:325px;top:903px;width:38px;height:26px"><span>2.&thinsp;000</span></div>
<div class="a pc l" style="left:364px;top:903px;width:22px;height:26px"><span>配话<br>动网<br>罩</span></div>
<div class="a pc l" style="left:89px;top:930px;width:16px;height:25px"><span>42</span></div>
<div class="a pc l nx" style="left:106px;top:930px;width:59px;height:25px"><span>2AAAACCL0310</span></div>
<div class="a pc l" style="left:166px;top:930px;width:69px;height:25px"><span>防爆轴流风机</span></div>
<div class="a pc l" style="left:236px;top:930px;width:65px;height:25px"><span>1.&thinsp;类型、规<br>格:BT35-11No2.8<br>型 、0.12kW</span></div>
<div class="a pc c" style="left:302px;top:930px;width:22px;height:25px"><span>台</span></div>
<div class="a pc r" style="left:325px;top:930px;width:38px;height:25px"><span>2.&thinsp;000</span></div>
<div class="a pc l" style="left:364px;top:930px;width:22px;height:25px"><span>配话<br>动网<br>罩</span></div>
<div class="a pc l" style="left:89px;top:956px;width:16px;height:26px"><span>43</span></div>
<div class="a pc l nx" style="left:106px;top:956px;width:59px;height:26px"><span>2AAAACCL0311</span></div>
<div class="a pc l" style="left:166px;top:956px;width:69px;height:26px"><span>百叶窗</span></div>
<div class="a pc l" style="left:236px;top:956px;width:65px;height:26px"><span>1.&thinsp;类型、规格:不锈<br>钢防雨百叶窗,<br>0.&thinsp;85*0.85</span></div>
<div class="a pc c" style="left:302px;top:956px;width:22px;height:26px"><span>m²</span></div>
<div class="a pc r" style="left:325px;top:956px;width:38px;height:26px"><span>39.&thinsp;740</span></div>
<div class="a pc l" style="left:236px;top:983px;width:65px;height:27px"><span>1.&thinsp;类型、规格:不锈</span></div>
<div class="a" style="left:478px;top:717px;width:1px;height:269px;background:#000"></div>
<div class="a" style="left:495px;top:717px;width:1px;height:269px;background:#000"></div>
<div class="a" style="left:555px;top:717px;width:1px;height:269px;background:#000"></div>
<div class="a" style="left:625px;top:717px;width:1px;height:269px;background:#000"></div>
<div class="a" style="left:691px;top:717px;width:1px;height:269px;background:#000"></div>
<div class="a" style="left:714px;top:717px;width:1px;height:269px;background:#000"></div>
<div class="a" style="left:753px;top:717px;width:1px;height:269px;background:#000"></div>
<div class="a" style="left:776px;top:717px;width:1px;height:269px;background:#000"></div>
<div class="a" style="left:478px;top:717px;width:299px;height:1px;background:#000"></div>
<div class="a" style="left:478px;top:741px;width:299px;height:1px;background:#000"></div>
<div class="a" style="left:478px;top:753px;width:299px;height:1px;background:#000"></div>
<div class="a" style="left:478px;top:771px;width:299px;height:1px;background:#000"></div>
<div class="a" style="left:478px;top:783px;width:299px;height:1px;background:#000"></div>
<div class="a" style="left:478px;top:796px;width:299px;height:1px;background:#000"></div>
<div class="a" style="left:478px;top:807px;width:299px;height:1px;background:#000"></div>
<div class="a" style="left:478px;top:852px;width:299px;height:1px;background:#000"></div>
<div class="a" style="left:478px;top:864px;width:299px;height:1px;background:#000"></div>
<div class="a" style="left:478px;top:882px;width:299px;height:1px;background:#000"></div>
<div class="a" style="left:478px;top:900px;width:299px;height:1px;background:#000"></div>
<div class="a" style="left:478px;top:918px;width:299px;height:1px;background:#000"></div>
<div class="a" style="left:478px;top:931px;width:299px;height:1px;background:#000"></div>
<div class="a" style="left:478px;top:948px;width:299px;height:1px;background:#000"></div>
<div class="a" style="left:478px;top:966px;width:299px;height:1px;background:#000"></div>
<div class="a" style="left:478px;top:985px;width:299px;height:1px;background:#000"></div>
<div class="a" style="left:478px;top:717px;width:299px;height:1px;background:#000"></div>
<div class="a ph" style="left:479px;top:718px;width:16px;height:23px"><span>序<br>号</span></div>
<div class="a ph" style="left:496px;top:718px;width:59px;height:23px"><span>项目编码</span></div>
<div class="a ph" style="left:556px;top:718px;width:69px;height:23px"><span>项目名称</span></div>
<div class="a ph" style="left:626px;top:718px;width:65px;height:23px"><span>项目特征</span></div>
<div class="a ph" style="left:692px;top:718px;width:22px;height:23px"><span>计量<br>单位</span></div>
<div class="a ph" style="left:715px;top:718px;width:38px;height:23px"><span>工程量</span></div>
<div class="a ph" style="left:754px;top:718px;width:22px;height:23px"><span>备注</span></div>
<div class="a pc l nx" style="left:496px;top:742px;width:59px;height:11px"><span>2AAAAD</span></div>
<div class="a pc l" style="left:556px;top:742px;width:69px;height:11px"><span>1.1.4 照明</span></div>
<div class="a pc l" style="left:479px;top:754px;width:16px;height:17px"><span>49</span></div>
<div class="a pc l nx" style="left:496px;top:754px;width:59px;height:17px"><span>2AAAADCL0601</span></div>
<div class="a pc l" style="left:556px;top:754px;width:69px;height:17px"><span>照明</span></div>
<div class="a pc c" style="left:692px;top:754px;width:22px;height:17px"><span>m³</span></div>
<div class="a pc r" style="left:715px;top:754px;width:38px;height:17px"><span>31200.&thinsp;500</span></div>
<div class="a pc l" style="left:754px;top:754px;width:22px;height:17px"><span>建筑<br>体积</span></div>
<div class="a pc l nx" style="left:496px;top:772px;width:59px;height:11px"><span>2AAB</span></div>
<div class="a pc l" style="left:556px;top:772px;width:69px;height:11px"><span>2 配电装置建筑</span></div>
<div class="a pc l nx" style="left:496px;top:784px;width:59px;height:12px"><span>2AABA</span></div>
<div class="a pc l" style="left:556px;top:784px;width:69px;height:12px"><span>2.1 主变压器系统</span></div>
<div class="a pc l nx" style="left:496px;top:797px;width:59px;height:10px"><span>2AABAA</span></div>
<div class="a pc l" style="left:556px;top:797px;width:69px;height:10px"><span>2.1.1 构支架及基础</span></div>
<div class="a pc l" style="left:479px;top:808px;width:16px;height:44px"><span>50</span></div>
<div class="a pc l nx" style="left:496px;top:808px;width:59px;height:44px"><span>2AABAACJ0901</span></div>
<div class="a pc l" style="left:556px;top:808px;width:69px;height:44px"><span>钢管支架</span></div>
<div class="a pc l" style="left:626px;top:808px;width:65px;height:44px"><span>1.&thinsp;材质:镀锌钢管杆</span></div>
<div class="a pc c" style="left:692px;top:808px;width:22px;height:44px"><span>t</span></div>
<div class="a pc r" style="left:715px;top:808px;width:38px;height:44px"><span>4.&thinsp;680</span></div>
<div class="a pc l" style="left:754px;top:808px;width:22px;height:44px"><span>仅土<br>方开<br>挖和<br>基础<br>施工</span></div>
<div class="a pc l" style="left:479px;top:853px;width:16px;height:11px"><span>51</span></div>
<div class="a pc l nx" style="left:496px;top:853px;width:59px;height:11px"><span>2AABAACJ0902</span></div>
<div class="a pc l" style="left:556px;top:853px;width:69px;height:11px"><span>地脚螺栓</span></div>
<div class="a pc c" style="left:692px;top:853px;width:22px;height:11px"><span>t</span></div>
<div class="a pc r" style="left:715px;top:853px;width:38px;height:11px"><span>0.&thinsp;480</span></div>
<div class="a pc l nx" style="left:496px;top:865px;width:59px;height:17px"><span>2AABAB</span></div>
<div class="a pc l" style="left:556px;top:865px;width:69px;height:17px"><span>2.1.2 主变压器设备<br>基础</span></div>
<div class="a pc l" style="left:479px;top:883px;width:16px;height:17px"><span>52</span></div>
<div class="a pc l nx" style="left:496px;top:883px;width:59px;height:17px"><span>2AABABCB1101</span></div>
<div class="a pc l" style="left:556px;top:883px;width:69px;height:17px"><span>变压器基础</span></div>
<div class="a pc l" style="left:626px;top:883px;width:65px;height:17px"><span>1.&thinsp;材质:现浇钢筋混<br>凝土</span></div>
<div class="a pc c" style="left:692px;top:883px;width:22px;height:17px"><span>m³</span></div>
<div class="a pc r" style="left:715px;top:883px;width:38px;height:17px"><span>240.&thinsp;000</span></div>
<div class="a pc l" style="left:479px;top:901px;width:16px;height:17px"><span>53</span></div>
<div class="a pc l nx" style="left:496px;top:901px;width:59px;height:17px"><span>2AABABCB1102</span></div>
<div class="a pc l" style="left:556px;top:901px;width:69px;height:17px"><span>散热器基础</span></div>
<div class="a pc l" style="left:626px;top:901px;width:65px;height:17px"><span>1.&thinsp;材质:现浇钢筋混<br>凝土</span></div>
<div class="a pc c" style="left:692px;top:901px;width:22px;height:17px"><span>m³</span></div>
<div class="a pc r" style="left:715px;top:901px;width:38px;height:17px"><span>180.&thinsp;000</span></div>
<div class="a pc l" style="left:479px;top:919px;width:16px;height:12px"><span>54</span></div>
<div class="a pc l nx" style="left:496px;top:919px;width:59px;height:12px"><span>2AABABCG1301</span></div>
<div class="a pc l" style="left:556px;top:919px;width:69px;height:12px"><span>钢筋制作安装</span></div>
<div class="a pc c" style="left:692px;top:919px;width:22px;height:12px"><span>t</span></div>
<div class="a pc r" style="left:715px;top:919px;width:38px;height:12px"><span>21.&thinsp;538</span></div>
<div class="a pc l nx" style="left:496px;top:932px;width:59px;height:16px"><span>2AABAC</span></div>
<div class="a pc l" style="left:556px;top:932px;width:69px;height:16px"><span>2.1.3 主变压器油坑<br>及卵石</span></div>
<div class="a pc l" style="left:479px;top:949px;width:16px;height:17px"><span>55</span></div>
<div class="a pc l nx" style="left:496px;top:949px;width:59px;height:17px"><span>2AABACCB1201</span></div>
<div class="a pc l" style="left:556px;top:949px;width:69px;height:17px"><span>变压器油池</span></div>
<div class="a pc l" style="left:626px;top:949px;width:65px;height:17px"><span>1.&thinsp;材质:现浇钢筋混<br>凝土</span></div>
<div class="a pc c" style="left:692px;top:949px;width:22px;height:17px"><span>m³</span></div>
<div class="a pc r" style="left:715px;top:949px;width:38px;height:17px"><span>300.&thinsp;000</span></div>
<div class="a pc l" style="left:479px;top:967px;width:16px;height:18px"><span>56</span></div>
<div class="a pc l nx" style="left:496px;top:967px;width:59px;height:18px"><span>2AABACCB1202</span></div>
<div class="a pc l" style="left:556px;top:967px;width:69px;height:18px"><span>散热器油池</span></div>
<div class="a pc l" style="left:626px;top:967px;width:65px;height:18px"><span>1.&thinsp;材质:现浇钢筋混<br>凝土</span></div>
<div class="a pc c" style="left:692px;top:967px;width:22px;height:18px"><span>m³</span></div>
<div class="a pc r" style="left:715px;top:967px;width:38px;height:18px"><span>240.&thinsp;000</span></div>
  <div class="a" style="left:435px;top:119px;width:364px;height:867px;background:linear-gradient(90deg,rgba(0,0,0,0) 0,rgba(0,0,0,0) 336px,rgba(0,0,0,0.10) 364px)"></div>
  </div>
  <!-- scrollbars -->
  <div class="a" style="left:799px;top:109px;width:8px;height:877px;background:#505050"></div>
  <div class="a" style="left:799px;top:109px;width:8px;height:284px;background:#878787"></div>
  <div class="a" style="left:36px;top:986px;width:771px;height:10px;background:#4a4a4a"></div>
  <div class="a" style="left:36px;top:986px;width:743px;height:10px;background:#979797"></div>
  <div class="a" style="left:0;top:996px;width:807px;height:2px;background:#2a2a2a"></div>
  <div class="a" style="left:0;top:998px;width:807px;height:1px;background:#6c6c6c"></div>
  <div class="a" style="left:0;top:999px;width:807px;height:31px;background:linear-gradient(#323232,#3a3a3a)"></div>
<!-- title bar -->
<svg class="a" style="left:3px;top:2px" width="21" height="21" viewBox="0 0 21 21">
  <defs><linearGradient id="lg1" x1="0" y1="0" x2="0" y2="1"><stop offset="0" stop-color="#e58a2c"/><stop offset="1" stop-color="#b5500f"/></linearGradient></defs>
  <rect x="0.5" y="0.5" width="20" height="20" rx="3" fill="url(#lg1)" stroke="#9a9a9a" stroke-width="0.8"/>
  <text x="10.5" y="14.5" font-family="Liberation Sans" font-size="8" font-weight="bold" fill="#f6e0c8" text-anchor="middle">PDF</text>
</svg>
<svg class="a" style="left:38px;top:5px" width="16" height="14" viewBox="0 0 16 14" fill="none" stroke="#9a9a9a" stroke-width="1.3">
  <path d="M3 5 H9.5 A4 4 0 0 1 9.5 13 H7"/><path d="M5.5 2 L2.5 5 L5.5 8"/>
</svg>
<svg class="a" style="left:62px;top:5px" width="16" height="14" viewBox="0 0 16 14" fill="none" stroke="#9a9a9a" stroke-width="1.3">
  <path d="M13 5 H6.5 A4 4 0 0 0 6.5 13 H9"/><path d="M10.5 2 L13.5 5 L10.5 8"/>
</svg>
<div class="t" style="left:291px;top:5px;font-size:13px;color:#e6e6e6;letter-spacing:-0.4px">工程量清单.pdf - PDF 快速看图 v4.8.1.76</div>
<svg class="a" style="left:718px;top:6px" width="14" height="12" viewBox="0 0 14 12" fill="#f2f2f2">
  <rect x="1" y="1" width="12" height="2.2"/><polygon points="1,5 13,5 7,11"/>
</svg>
<div class="a" style="left:743px;top:15px;width:10px;height:2.5px;background:#f2f2f2"></div>
<div class="a" style="left:767px;top:6px;width:12px;height:12px;border:1.3px solid #f2f2f2;border-top-width:3px"></div>
<svg class="a" style="left:790px;top:5px" width="14" height="14" viewBox="0 0 14 14" stroke="#f2f2f2" stroke-width="1.3"><path d="M1 1 L13 13 M13 1 L1 13"/></svg>

<!-- toolbar icons -->
<svg class="a" style="left:0;top:24px" width="807" height="64" viewBox="0 24 807 64" fill="none" stroke-linejoin="round" stroke-linecap="round">
  <g stroke="#f0f0f0" stroke-width="1.4">
    <!-- folder -->
    <path d="M11.3 56.5 V38 H18.5 L20.5 40.5 H33 V56.5 Z"/><path d="M11.3 43.5 H33"/>
    <!-- floppy -->
    <path d="M54.5 36.5 H72 L76.2 41 V57.8 H54.5 Z"/><path d="M60 40.8 H70.5" stroke-width="1.8"/><path d="M58.3 57.5 V47.5 H72.3 V57.5"/>
    <!-- convert -->
    <path d="M207 47 V43 A3 3 0 0 1 210 40 H228"/><path d="M225 36.5 L228.5 40 L225 43.5"/>
    <path d="M229 45 V49 A3 3 0 0 1 226 52 H207.5"/><path d="M211 48.5 L207.5 52 L211 55.5"/>
    <!-- view -->
    <path d="M256 39 V36.5 H259 M275 36.5 H278 V39 M278 55 V57.5 H275 M259 57.5 H256 V55"/>
    <path d="M260.5 39 H270 L274 43 V54.5 H260.5 Z"/><path d="M269.5 39 V43.5 H274"/>
    <!-- zoom window -->
    <circle cx="320.5" cy="46" r="10"/><path d="M327.5 53 L333.5 59"/>
    <path d="M315.5 43.5 V41 H318 M323 41 H325.5 V43.5 M325.5 48.5 V51 H323 M318 51 H315.5 V48.5"/>
    <!-- rotate -->
    <rect x="366" y="36.5" width="12" height="14" rx="1.5"/><rect x="373.3" y="47" width="15" height="11.5" rx="1.5"/>
    <path d="M380.5 38.5 Q385 38.5 386 43"/><path d="M384 42 L386 44 L388 41.5" stroke-width="1.2"/>
    <!-- mouse -->
    <rect x="422.5" y="34" width="19.5" height="25.5" rx="9.7"/><path d="M422.5 51 H442"/>
    <path d="M432.3 38.5 V48 M430 40.5 L432.3 38.3 L434.6 40.5 M430 46 L432.3 48.2 L434.6 46" stroke-width="1.5"/>
    <!-- ratio -->
    <path d="M481.5 36.5 V44.5 M504.5 36.5 V44.5" stroke="#bdbdbd" stroke-width="1.6"/>
    <path d="M484 40.5 H502 M486.5 38 L484 40.5 L486.5 43 M499.5 38 L502 40.5 L499.5 43"/>
    <rect x="481.5" y="48.5" width="23" height="8" rx="1"/>
    <path d="M485 48.5 V51.5 M488.5 48.5 V52.5 M492 48.5 V51.5 M495.5 48.5 V52.5 M499 48.5 V51.5 M502 48.5 V52.5"/>
    <!-- measure -->
    <path d="M524 41.5 L528.8 36.5 L547 53 L542.3 58 Z"/>
    <path d="M531 38.5 L529.5 40 M533.3 40.6 L531.3 42.6 M540 46.7 L538.5 48.2 M542.3 48.8 L540.3 50.8 M544.6 50.9 L543.1 52.4" stroke-width="1.1"/>
    <path d="M542.2 36 L547.5 41.3 L533.3 55.3 L526.5 57.3 L528.3 50.3 Z" fill="#3c3c3c"/>
    <path d="M528.3 50.3 L533.3 55.3"/>
    <!-- pencil -->
    <path d="M689.5 57.3 H698"/><path d="M698 57 L697.3 52 L708.5 35.5 L712.5 38 L701.5 54.5 Z"/><path d="M697.6 52.5 L701.5 54.5"/><path d="M707 37.8 L711 40.3"/>
    <!-- highlighter -->
    <path d="M747.3 35.5 L753.5 39.2 L753.5 42.3 L746.3 52.8 L742.8 55 L741 58 L735.6 56.6 L737.9 53.2 L737.8 48.2 L744.2 37.4 Z"/>
    <path d="M744.2 37.4 L752.4 42.1 M737.8 48.2 L746.3 52.8 M737.9 53.2 L742.8 55"/>
  </g>
  <!-- separators -->
  <path d="M242.5 29 V82 M468.5 29 V82" stroke="#cfcfcf" stroke-width="1"/>
  <g stroke="#c9a24c" stroke-width="1.6">
    <!-- doc -->
    <path d="M99 36.5 H112 L117.5 42 V58 H99 Z"/><path d="M112 36.5 V42 H117.5" stroke-width="1.2"/>
    <path d="M102.5 40.8 H108.5 M102.5 44.3 H109.5 M102.5 47.8 H114.5 M102.5 51.3 H114.5 M102.5 54.8 H114.5" stroke-width="1.3"/>
    <!-- compare -->
    <rect x="150.5" y="42" width="16.5" height="16.5" rx="2.5"/><rect x="158" y="34.5" width="16.5" height="16.5" rx="2.5"/>
    <!-- stats -->
    <path d="M596 58 H581 A1.5 1.5 0 0 1 579.5 56.5 V36.8 A1.5 1.5 0 0 1 581 35.3 H600.5 A1.5 1.5 0 0 1 602 36.8 V50"/>
    <path d="M584.5 42.5 L587 39.5 L589 41 L593 37.5" stroke-width="1.2"/>
    <path d="M584.5 48 V45.5 M587.5 48 V44 M590.5 48 V45 M593.5 48 V43.5" stroke-width="1.3"/>
    <path d="M587.5 51.5 V57 M602 51.5 V57 M589.5 54.3 H600 M591.5 52.5 L589.5 54.3 L591.5 56 M598 52.5 L600 54.3 L598 56" stroke-width="1.2"/>
    <!-- line -->
    <path d="M641.5 56.5 L662.5 36.3" stroke-width="1.5"/>
  </g>
  <rect x="158.5" y="42.5" width="8" height="8" rx="1.5" fill="#c9a24c"/>
  <text x="170.5" y="41.5" font-family="Liberation Sans" font-size="5.5" font-weight="bold" fill="#c9a24c" text-anchor="middle">A</text>
  <text x="154.5" y="56.5" font-family="Liberation Sans" font-size="5.5" font-weight="bold" fill="#c9a24c" text-anchor="middle">B</text>
  <path d="M797.5 53.5 L801 56.5 L797.5 59.5 M802 53.5 L805.5 56.5 L802 59.5" stroke="#bbbbbb" stroke-width="1.3"/>
</svg>
<div class="t lbl" style="left:10px">文件</div>
<div class="t lbl" style="left:53px">保存</div>
<div class="t lbl" style="left:96px">文档</div>
<div class="t lbl" style="left:139px">图纸对比</div>
<div class="t lbl" style="left:206px">转换</div>
<div class="t lbl" style="left:255px">视图</div>
<div class="t lbl" style="left:298px">窗口缩放</div>
<div class="t lbl" style="left:365px">旋转</div>
<div class="t lbl" style="left:408px">滚轮翻页</div>
<div class="t lbl" style="left:481px">比例</div>
<div class="t lbl" style="left:524px">测量</div>
<div class="t lbl" style="left:567px">测量统计</div>
<div class="t lbl" style="left:634px">画直线</div>
<div class="t lbl" style="left:689px">画笔</div>
<div class="t lbl" style="left:732px">高亮</div>

<!-- tab -->
<div class="t" style="left:56px;top:91px;font-size:13px;color:#f4f4f4">工程量清单</div>
<svg class="a" style="left:174px;top:93px" width="8" height="8" viewBox="0 0 8 8" stroke="#eeeeee" stroke-width="1"><path d="M1 1 L7 7 M7 1 L1 7"/></svg>
<svg class="a" style="left:792px;top:97px" width="14" height="8" viewBox="0 0 14 8" fill="none" stroke="#dddddd" stroke-width="1"><path d="M1 1 L7 6.5 L13 1"/></svg>

<!-- sidebar icons -->
<svg class="a" style="left:0;top:109px" width="33" height="100" viewBox="0 109 33 100" fill="none" stroke="#e0e0e0" stroke-width="1.3">
  <path d="M9.5 117 H24 V136 L16.7 132 L9.5 136 Z"/>
  <rect x="7.8" y="151.8" width="7.8" height="7.8" rx="1.5"/><rect x="17.6" y="151.8" width="7.8" height="7.8" rx="1.5"/>
  <rect x="7.8" y="161.6" width="7.8" height="7.8" rx="1.5"/><rect x="17.6" y="161.6" width="7.8" height="7.8" rx="1.5"/>
  <circle cx="16.6" cy="194.3" r="9.3"/>
  <path d="M13.3 191.5 A3.3 3.3 0 1 1 17.5 194.5 Q16.5 195.2 16.5 196.5 V198"/><circle cx="16.5" cy="200.3" r="0.5" fill="#e0e0e0"/>
</svg>

<!-- status bar -->
<svg class="a" style="left:0;top:999px" width="807" height="31" viewBox="0 999 807 31" fill="none" stroke-linecap="round" stroke-linejoin="round">
  <g stroke="#cfcfcf" stroke-width="1.2">
    <path d="M183 1009.5 L176.5 1015.5 L183 1021.5"/>
    <path d="M278 1009.5 L284.5 1015.5 L278 1021.5"/>
  </g>
  <g stroke="#d6d6d6" stroke-width="1.1">
    <rect x="307.5" y="1008.5" width="4.5" height="4.5" rx="0.8"/><rect x="314" y="1008.5" width="4.5" height="4.5" rx="0.8"/>
    <rect x="307.5" y="1015" width="4.5" height="4.5" rx="0.8"/><circle cx="316.3" cy="1017.3" r="2.3"/>
  </g>
  <path d="M543.5 1001 V1030 M572.5 1001 V1030 M634.5 1001 V1030 M696 1001 V1030" stroke="#8a8a8a" stroke-width="1"/>
  <rect x="581" y="1002" width="22.5" height="28" rx="2" fill="#555555"/>
  <rect x="643" y="1002" width="22.5" height="28" rx="2" fill="#555555"/>
  <rect x="668" y="1002" width="23" height="28" rx="2" fill="#555555"/>
  <g stroke="#d8d8d8" stroke-width="1.1">
    <path d="M552 1016 Q558.7 1008.5 565.5 1016 Q558.7 1023.5 552 1016 Z"/><circle cx="558.7" cy="1016" r="2"/>
    <path d="M586.5 1015 V1013 a1.2 1.2 0 0 1 2.4 0 V1011.5 a1.2 1.2 0 0 1 2.4 0 V1011 a1.2 1.2 0 0 1 2.4 0 V1012 a1.2 1.2 0 0 1 2.4 0 V1018 a5 5 0 0 1 -5 5 H592 a5.5 5.5 0 0 1 -5.5 -5.5 Z"/>
    <path d="M617 1022.5 H611.5 a1 1 0 0 1 -1 -1 V1010.5 a1 1 0 0 1 1 -1 H620.5 a1 1 0 0 1 1 1 V1015"/><path d="M619 1017 V1023.5 M615.8 1020.3 H622.3"/>
    <rect x="648.5" y="1009.5" width="11.5" height="13"/><path d="M654.3 1009.5 V1022.5 M650.3 1012.5 H652.5 M650.3 1015 H652.5 M650.3 1017.5 H652.5 M650.3 1020 H652.5 M656 1012.5 H658.2 M656 1015 H658.2 M656 1017.5 H658.2 M656 1020 H658.2" stroke-width="1"/>
    <path d="M673.5 1009.5 V1013 M685.5 1009.5 V1013 M673.5 1019.5 V1023 M685.5 1019.5 V1023 M673.5 1011.3 H685.5 M673.5 1013.5 H685.5 M673.5 1016.3 H685.5 M673.5 1019 H685.5 M673.5 1021.3 H685.5" stroke-width="1"/>
  </g>
  <path d="M714.5 1016.5 H719.5" stroke="#e6e6e6" stroke-width="1.6"/>
  <path d="M784 1016.5 H794 M789 1011.5 V1021.5" stroke="#f0f0f0" stroke-width="1.6"/>
</svg>
<div class="a" style="left:194px;top:1005px;width:40px;height:21px;background:#fff;border-radius:3px"></div>
<div class="t" style="left:194px;top:1009px;width:40px;text-align:center;font-size:13px;color:#222">1</div>
<div class="t" style="left:241px;top:1009px;font-size:13px;color:#cccccc">/</div>
<div class="t" style="left:259px;top:1009px;font-size:13px;color:#cccccc">9</div>
<div class="t" style="left:324px;top:1009px;font-size:12px;color:#f0f0f0;font-weight:bold">标注分类</div>
<div class="a" style="left:387px;top:1006px;width:150px;height:20px;border:1px solid #8c8c8c;background:#3f3f3f"></div>
<div class="a" style="left:391px;top:1009px;width:16px;height:15px;background:#ff0000"></div>
<div class="t" style="left:413px;top:1010px;font-size:12px;color:#dddddd">未分类</div>
<svg class="a" style="left:523px;top:1013px" width="10" height="7" viewBox="0 0 10 7"><polygon points="0.5,0.5 9.5,0.5 5,6" fill="#eeeeee"/></svg>
<div class="t" style="left:738px;top:1010px;font-size:13px;color:#e8e8e8">50%</div>

</div>
<div id="xl">
  <div class="a" style="left:0;top:0;width:1px;height:1030px;background:#1e6b3f"></div>
  <div class="a" style="left:1px;top:0;width:1105px;height:65px;background:#217346"></div>
  <div class="a" style="left:1px;top:65px;width:1105px;height:94px;background:#f3f3f3"></div>
  <div class="a" style="left:1px;top:159px;width:1105px;height:1px;background:#d5d5d5"></div>
  <div class="a" style="left:1px;top:160px;width:1105px;height:821px;background:#e6e6e6"></div>
<div class="a" style="left:34px;top:229px;width:1050px;height:752px;background:#fff"></div>
<div class="a" style="left:86px;top:229px;width:1px;height:752px;background:#d4d4d4"></div>
<div class="a" style="left:256px;top:229px;width:1px;height:752px;background:#d4d4d4"></div>
<div class="a" style="left:445px;top:229px;width:1px;height:752px;background:#d4d4d4"></div>
<div class="a" style="left:624px;top:229px;width:1px;height:752px;background:#d4d4d4"></div>
<div class="a" style="left:694px;top:229px;width:1px;height:752px;background:#d4d4d4"></div>
<div class="a" style="left:801px;top:229px;width:1px;height:752px;background:#d4d4d4"></div>
<div class="a" style="left:871px;top:229px;width:1px;height:752px;background:#d4d4d4"></div>
<div class="a" style="left:954px;top:229px;width:1px;height:752px;background:#d4d4d4"></div>
<div class="a" style="left:1037px;top:229px;width:1px;height:752px;background:#d4d4d4"></div>
<div class="a" style="left:34px;top:251px;width:1050px;height:1px;background:#d4d4d4"></div>
<div class="a" style="left:34px;top:295px;width:1050px;height:1px;background:#d4d4d4"></div>
<div class="a" style="left:34px;top:339px;width:1050px;height:1px;background:#d4d4d4"></div>
<div class="a" style="left:34px;top:383px;width:1050px;height:1px;background:#d4d4d4"></div>
<div class="a" style="left:34px;top:427px;width:1050px;height:1px;background:#d4d4d4"></div>
<div class="a" style="left:34px;top:449px;width:1050px;height:1px;background:#d4d4d4"></div>
<div class="a" style="left:34px;top:471px;width:1050px;height:1px;background:#d4d4d4"></div>
<div class="a" style="left:34px;top:493px;width:1050px;height:1px;background:#d4d4d4"></div>
<div class="a" style="left:34px;top:515px;width:1050px;height:1px;background:#d4d4d4"></div>
<div class="a" style="left:34px;top:537px;width:1050px;height:1px;background:#d4d4d4"></div>
<div class="a" style="left:34px;top:581px;width:1050px;height:1px;background:#d4d4d4"></div>
<div class="a" style="left:34px;top:603px;width:1050px;height:1px;background:#d4d4d4"></div>
<div class="a" style="left:34px;top:625px;width:1050px;height:1px;background:#d4d4d4"></div>
<div class="a" style="left:34px;top:647px;width:1050px;height:1px;background:#d4d4d4"></div>
<div class="a" style="left:34px;top:691px;width:1050px;height:1px;background:#d4d4d4"></div>
<div class="a" style="left:34px;top:713px;width:1050px;height:1px;background:#d4d4d4"></div>
<div class="a" style="left:34px;top:735px;width:1050px;height:1px;background:#d4d4d4"></div>
<div class="a" style="left:34px;top:779px;width:1050px;height:1px;background:#d4d4d4"></div>
<div class="a" style="left:34px;top:845px;width:1050px;height:1px;background:#d4d4d4"></div>
<div class="a" style="left:34px;top:911px;width:1050px;height:1px;background:#d4d4d4"></div>
<div class="a" style="left:34px;top:933px;width:1050px;height:1px;background:#d4d4d4"></div>
<div class="a" style="left:34px;top:955px;width:1050px;height:1px;background:#d4d4d4"></div>
<div class="a" style="left:34px;top:977px;width:1050px;height:1px;background:#d4d4d4"></div>
<div class="a" style="left:86px;top:230px;width:1px;height:682px;background:#000"></div>
<div class="a" style="left:256px;top:230px;width:1px;height:682px;background:#000"></div>
<div class="a" style="left:445px;top:230px;width:1px;height:682px;background:#000"></div>
<div class="a" style="left:624px;top:230px;width:1px;height:682px;background:#000"></div>
<div class="a" style="left:694px;top:230px;width:1px;height:682px;background:#000"></div>
<div class="a" style="left:801px;top:230px;width:1px;height:682px;background:#000"></div>
<div class="a" style="left:871px;top:230px;width:1px;height:682px;background:#000"></div>
<div class="a" style="left:35px;top:251px;width:837px;height:1px;background:#000"></div>
<div class="a" style="left:35px;top:295px;width:837px;height:1px;background:#000"></div>
<div class="a" style="left:35px;top:339px;width:837px;height:1px;background:#000"></div>
<div class="a" style="left:35px;top:383px;width:837px;height:1px;background:#000"></div>
<div class="a" style="left:35px;top:427px;width:837px;height:1px;background:#000"></div>
<div class="a" style="left:35px;top:449px;width:837px;height:1px;background:#000"></div>
<div class="a" style="left:35px;top:471px;width:837px;height:1px;background:#000"></div>
<div class="a" style="left:35px;top:493px;width:837px;height:1px;background:#000"></div>
<div class="a" style="left:35px;top:515px;width:837px;height:1px;background:#000"></div>
<div class="a" style="left:35px;top:537px;width:837px;height:1px;background:#000"></div>
<div class="a" style="left:35px;top:581px;width:837px;height:1px;background:#000"></div>
<div class="a" style="left:35px;top:603px;width:837px;height:1px;background:#000"></div>
<div class="a" style="left:35px;top:625px;width:837px;height:1px;background:#000"></div>
<div class="a" style="left:35px;top:647px;width:837px;height:1px;background:#000"></div>
<div class="a" style="left:35px;top:691px;width:837px;height:1px;background:#000"></div>
<div class="a" style="left:35px;top:713px;width:837px;height:1px;background:#000"></div>
<div class="a" style="left:35px;top:735px;width:837px;height:1px;background:#000"></div>
<div class="a" style="left:35px;top:779px;width:837px;height:1px;background:#000"></div>
<div class="a" style="left:35px;top:845px;width:837px;height:1px;background:#000"></div>
<div class="a" style="left:35px;top:911px;width:837px;height:1px;background:#000"></div>
<div class="a" style="left:1px;top:208px;width:1083px;height:21px;background:#e6e6e6"></div>
<div class="a" style="left:35px;top:208px;width:51px;height:21px;background:#d3d3d3"></div>
<div class="a" style="left:86px;top:208px;width:1px;height:21px;background:linear-gradient(#e0e0e0,#a9a9a9 40%,#a9a9a9)"></div>
<div class="t hd" style="left:35px;top:208px;width:51px;color:#217346">A</div>
<div class="a" style="left:256px;top:208px;width:1px;height:21px;background:linear-gradient(#e0e0e0,#a9a9a9 40%,#a9a9a9)"></div>
<div class="t hd" style="left:87px;top:208px;width:169px;color:#000">B</div>
<div class="a" style="left:445px;top:208px;width:1px;height:21px;background:linear-gradient(#e0e0e0,#a9a9a9 40%,#a9a9a9)"></div>
<div class="t hd" style="left:257px;top:208px;width:188px;color:#000">C</div>
<div class="a" style="left:624px;top:208px;width:1px;height:21px;background:linear-gradient(#e0e0e0,#a9a9a9 40%,#a9a9a9)"></div>
<div class="t hd" style="left:446px;top:208px;width:178px;color:#000">D</div>
<div class="a" style="left:694px;top:208px;width:1px;height:21px;background:linear-gradient(#e0e0e0,#a9a9a9 40%,#a9a9a9)"></div>
<div class="t hd" style="left:625px;top:208px;width:69px;color:#000">E</div>
<div class="a" style="left:801px;top:208px;width:1px;height:21px;background:linear-gradient(#e0e0e0,#a9a9a9 40%,#a9a9a9)"></div>
<div class="t hd" style="left:695px;top:208px;width:106px;color:#000">F</div>
<div class="a" style="left:871px;top:208px;width:1px;height:21px;background:linear-gradient(#e0e0e0,#a9a9a9 40%,#a9a9a9)"></div>
<div class="t hd" style="left:802px;top:208px;width:69px;color:#000">G</div>
<div class="a" style="left:954px;top:208px;width:1px;height:21px;background:linear-gradient(#e0e0e0,#a9a9a9 40%,#a9a9a9)"></div>
<div class="t hd" style="left:872px;top:208px;width:82px;color:#000">H</div>
<div class="a" style="left:1037px;top:208px;width:1px;height:21px;background:linear-gradient(#e0e0e0,#a9a9a9 40%,#a9a9a9)"></div>
<div class="t hd" style="left:955px;top:208px;width:82px;color:#000">I</div>
<div class="t hd" style="left:1038px;top:208px;width:82px;color:#000">J</div>
<div class="a" style="left:1px;top:228px;width:1083px;height:1px;background:#ececec"></div>
<div class="a" style="left:1px;top:229px;width:1083px;height:1px;background:#9e9e9e"></div>
<svg class="a" style="left:17px;top:212px" width="15" height="14"><polygon points="14,0 14,14 0,14" fill="#b9b9b9"/></svg>
<div class="a" style="left:1px;top:230px;width:33px;height:751px;background:#e6e6e6"></div>
<div class="a" style="left:1px;top:230px;width:33px;height:21px;background:#d3d3d3"></div>
<div class="a" style="left:1px;top:251px;width:33px;height:1px;background:#b0b0b0"></div>
<div class="t rh" style="left:1px;top:231px;width:33px;color:#217346">1</div>
<div class="a" style="left:1px;top:295px;width:33px;height:1px;background:#b0b0b0"></div>
<div class="t rh" style="left:1px;top:275px;width:33px;color:#000">2</div>
<div class="a" style="left:1px;top:339px;width:33px;height:1px;background:#b0b0b0"></div>
<div class="t rh" style="left:1px;top:319px;width:33px;color:#000">3</div>
<div class="a" style="left:1px;top:383px;width:33px;height:1px;background:#b0b0b0"></div>
<div class="t rh" style="left:1px;top:363px;width:33px;color:#000">4</div>
<div class="a" style="left:1px;top:427px;width:33px;height:1px;background:#b0b0b0"></div>
<div class="t rh" style="left:1px;top:407px;width:33px;color:#000">5</div>
<div class="a" style="left:1px;top:449px;width:33px;height:1px;background:#b0b0b0"></div>
<div class="t rh" style="left:1px;top:429px;width:33px;color:#000">6</div>
<div class="a" style="left:1px;top:471px;width:33px;height:1px;background:#b0b0b0"></div>
<div class="t rh" style="left:1px;top:451px;width:33px;color:#000">7</div>
<div class="a" style="left:1px;top:493px;width:33px;height:1px;background:#b0b0b0"></div>
<div class="t rh" style="left:1px;top:473px;width:33px;color:#000">8</div>
<div class="a" style="left:1px;top:515px;width:33px;height:1px;background:#b0b0b0"></div>
<div class="t rh" style="left:1px;top:495px;width:33px;color:#000">9</div>
<div class="a" style="left:1px;top:537px;width:33px;height:1px;background:#b0b0b0"></div>
<div class="t rh" style="left:1px;top:517px;width:33px;color:#000">10</div>
<div class="a" style="left:1px;top:581px;width:33px;height:1px;background:#b0b0b0"></div>
<div class="t rh" style="left:1px;top:561px;width:33px;color:#000">11</div>
<div class="a" style="left:1px;top:603px;width:33px;height:1px;background:#b0b0b0"></div>
<div class="t rh" style="left:1px;top:583px;width:33px;color:#000">12</div>
<div class="a" style="left:1px;top:625px;width:33px;height:1px;background:#b0b0b0"></div>
<div class="t rh" style="left:1px;top:605px;width:33px;color:#000">13</div>
<div class="a" style="left:1px;top:647px;width:33px;height:1px;background:#b0b0b0"></div>
<div class="t rh" style="left:1px;top:627px;width:33px;color:#000">14</div>
<div class="a" style="left:1px;top:691px;width:33px;height:1px;background:#b0b0b0"></div>
<div class="t rh" style="left:1px;top:671px;width:33px;color:#000">15</div>
<div class="a" style="left:1px;top:713px;width:33px;height:1px;background:#b0b0b0"></div>
<div class="t rh" style="left:1px;top:693px;width:33px;color:#000">16</div>
<div class="a" style="left:1px;top:735px;width:33px;height:1px;background:#b0b0b0"></div>
<div class="t rh" style="left:1px;top:715px;width:33px;color:#000">17</div>
<div class="a" style="left:1px;top:779px;width:33px;height:1px;background:#b0b0b0"></div>
<div class="t rh" style="left:1px;top:759px;width:33px;color:#000">18</div>
<div class="a" style="left:1px;top:845px;width:33px;height:1px;background:#b0b0b0"></div>
<div class="t rh" style="left:1px;top:825px;width:33px;color:#000">19</div>
<div class="a" style="left:1px;top:911px;width:33px;height:1px;background:#b0b0b0"></div>
<div class="t rh" style="left:1px;top:891px;width:33px;color:#000">20</div>
<div class="a" style="left:1px;top:933px;width:33px;height:1px;background:#b0b0b0"></div>
<div class="t rh" style="left:1px;top:913px;width:33px;color:#000">21</div>
<div class="a" style="left:1px;top:955px;width:33px;height:1px;background:#b0b0b0"></div>
<div class="t rh" style="left:1px;top:935px;width:33px;color:#000">22</div>
<div class="a" style="left:1px;top:977px;width:33px;height:1px;background:#b0b0b0"></div>
<div class="t rh" style="left:1px;top:957px;width:33px;color:#000">23</div>
<div class="a" style="left:34px;top:230px;width:1px;height:751px;background:#a0a0a0"></div>
<div class="a cell" style="left:35px;top:230.5px;width:51px;height:21px"><span>18</span></div>
<div class="a cell" style="left:87px;top:230.5px;width:169px;height:21px"><span>2AAAAACE0801</span></div>
<div class="a cell" style="left:257px;top:230.5px;width:188px;height:21px"><span><i class="z">内墙面装饰</i></span></div>
<div class="a cell" style="left:446px;top:230.5px;width:178px;height:21px"><span>1.<i class="z">面层材质</i>:<i class="z">水泥砂浆</i></span></div>
<div class="a cell" style="left:625px;top:230.5px;width:69px;height:21px"><span>m²</span></div>
<div class="a cell" style="left:695px;top:230.5px;width:106px;height:21px"><span>10610.000</span></div>
<svg class="a" style="left:35px;top:230px" width="8" height="8"><polygon points="0,0 8,0 0,8.5" fill="#008000"/></svg>
<svg class="a" style="left:695px;top:230px" width="8" height="8"><polygon points="0,0 8,0 0,8.5" fill="#008000"/></svg>
<div class="a cell" style="left:35px;top:252.5px;width:51px;height:43px"><span>19</span></div>
<div class="a cell" style="left:87px;top:252.5px;width:169px;height:43px"><span>2AAAAACD0802</span></div>
<div class="a cell" style="left:257px;top:252.5px;width:188px;height:43px"><span><i class="z">地下室防水</i></span></div>
<div class="a cell" style="left:446px;top:252.5px;width:178px;height:43px"><span>1.<i class="z">防水材质</i>:<i class="z">改性沥青卷</i><br><i class="z">材防水</i></span></div>
<div class="a cell" style="left:625px;top:252.5px;width:69px;height:43px"><span>m²</span></div>
<div class="a cell" style="left:695px;top:252.5px;width:106px;height:43px"><span>2800.000</span></div>
<svg class="a" style="left:35px;top:252px" width="8" height="8"><polygon points="0,0 8,0 0,8.5" fill="#008000"/></svg>
<svg class="a" style="left:695px;top:252px" width="8" height="8"><polygon points="0,0 8,0 0,8.5" fill="#008000"/></svg>
<div class="a cell" style="left:35px;top:296.5px;width:51px;height:43px"><span>20</span></div>
<div class="a cell" style="left:87px;top:296.5px;width:169px;height:43px"><span>2AAAAACH0801</span></div>
<div class="a cell" style="left:257px;top:296.5px;width:188px;height:43px"><span><i class="z">其他钢结构</i></span></div>
<div class="a cell" style="left:625px;top:296.5px;width:69px;height:43px"><span>t</span></div>
<div class="a cell" style="left:695px;top:296.5px;width:106px;height:43px"><span>28.000</span></div>
<div class="a cell" style="left:802px;top:296.5px;width:69px;height:43px"><span><i class="z">钢吊车</i><br><i class="z">梁</i></span></div>
<svg class="a" style="left:35px;top:296px" width="8" height="8"><polygon points="0,0 8,0 0,8.5" fill="#008000"/></svg>
<svg class="a" style="left:695px;top:296px" width="8" height="8"><polygon points="0,0 8,0 0,8.5" fill="#008000"/></svg>
<div class="a cell" style="left:35px;top:340.5px;width:51px;height:43px"><span>21</span></div>
<div class="a cell" style="left:87px;top:340.5px;width:169px;height:43px"><span>2AAAAACH0802</span></div>
<div class="a cell" style="left:257px;top:340.5px;width:188px;height:43px"><span><i class="z">其他钢结构</i></span></div>
<div class="a cell" style="left:625px;top:340.5px;width:69px;height:43px"><span>t</span></div>
<div class="a cell" style="left:695px;top:340.5px;width:106px;height:43px"><span>7.000</span></div>
<div class="a cell" style="left:802px;top:340.5px;width:69px;height:43px"><span><i class="z">吊车轨</i><br><i class="z">道</i></span></div>
<svg class="a" style="left:35px;top:340px" width="8" height="8"><polygon points="0,0 8,0 0,8.5" fill="#008000"/></svg>
<svg class="a" style="left:695px;top:340px" width="8" height="8"><polygon points="0,0 8,0 0,8.5" fill="#008000"/></svg>
<div class="a cell" style="left:35px;top:384.5px;width:51px;height:43px"><span>22</span></div>
<div class="a cell" style="left:87px;top:384.5px;width:169px;height:43px"><span>2AAAAACH1301</span></div>
<div class="a cell" style="left:257px;top:384.5px;width:188px;height:43px"><span><i class="z">钢结构镀锌</i></span></div>
<div class="a cell" style="left:625px;top:384.5px;width:69px;height:43px"><span>t</span></div>
<div class="a cell" style="left:695px;top:384.5px;width:106px;height:43px"><span>12.000</span></div>
<div class="a cell" style="left:802px;top:384.5px;width:69px;height:43px"><span>GIS<i class="z">埋件</i><br><i class="z">镀锌</i></span></div>
<svg class="a" style="left:35px;top:384px" width="8" height="8"><polygon points="0,0 8,0 0,8.5" fill="#008000"/></svg>
<svg class="a" style="left:695px;top:384px" width="8" height="8"><polygon points="0,0 8,0 0,8.5" fill="#008000"/></svg>
<div class="a cell" style="left:35px;top:428.5px;width:51px;height:21px"><span>23</span></div>
<div class="a cell" style="left:87px;top:428.5px;width:169px;height:21px"><span>2AAAAACB0601</span></div>
<div class="a cell" style="left:257px;top:428.5px;width:188px;height:21px"><span><i class="z">设备基础</i></span></div>
<div class="a cell" style="left:446px;top:428.5px;width:178px;height:21px"><span>1.<i class="z">材质</i>:<i class="z">现浇钢筋混凝土</i></span></div>
<div class="a cell" style="left:625px;top:428.5px;width:69px;height:21px"><span>m²</span></div>
<div class="a cell" style="left:695px;top:428.5px;width:106px;height:21px"><span>100.000</span></div>
<div class="a cell" style="left:802px;top:428.5px;width:69px;height:21px"><span>GIS<i class="z">基础</i></span></div>
<svg class="a" style="left:35px;top:428px" width="8" height="8"><polygon points="0,0 8,0 0,8.5" fill="#008000"/></svg>
<svg class="a" style="left:695px;top:428px" width="8" height="8"><polygon points="0,0 8,0 0,8.5" fill="#008000"/></svg>
<div class="a cell" style="left:35px;top:450.5px;width:51px;height:21px"><span>24</span></div>
<div class="a cell" style="left:87px;top:450.5px;width:169px;height:21px"><span>2AAAAACG1101</span></div>
<div class="a cell" style="left:257px;top:450.5px;width:188px;height:21px"><span><i class="z">二次浇筑混凝土</i></span></div>
<div class="a cell" style="left:446px;top:450.5px;width:178px;height:21px"><span>1.<i class="z">材质</i>:<i class="z">现浇轻质混凝土</i></span></div>
<div class="a cell" style="left:625px;top:450.5px;width:69px;height:21px"><span>m³</span></div>
<div class="a cell" style="left:695px;top:450.5px;width:106px;height:21px"><span>300.000</span></div>
<svg class="a" style="left:35px;top:450px" width="8" height="8"><polygon points="0,0 8,0 0,8.5" fill="#008000"/></svg>
<svg class="a" style="left:695px;top:450px" width="8" height="8"><polygon points="0,0 8,0 0,8.5" fill="#008000"/></svg>
<div class="a cell" style="left:35px;top:472.5px;width:51px;height:21px"><span>25</span></div>
<div class="a cell" style="left:87px;top:472.5px;width:169px;height:21px"><span>2AAAAACE0601</span></div>
<div class="a cell" style="left:257px;top:472.5px;width:188px;height:21px"><span><i class="z">屏蔽网</i></span></div>
<div class="a cell" style="left:446px;top:472.5px;width:178px;height:21px"><span>1.<i class="z">材质</i>:<i class="z">镀锌钢板</i></span></div>
<div class="a cell" style="left:625px;top:472.5px;width:69px;height:21px"><span>m²</span></div>
<div class="a cell" style="left:695px;top:472.5px;width:106px;height:21px"><span>1050.000</span></div>
<svg class="a" style="left:35px;top:472px" width="8" height="8"><polygon points="0,0 8,0 0,8.5" fill="#008000"/></svg>
<svg class="a" style="left:695px;top:472px" width="8" height="8"><polygon points="0,0 8,0 0,8.5" fill="#008000"/></svg>
<div class="a cell" style="left:35px;top:494.5px;width:51px;height:21px"><span>26</span></div>
<div class="a cell" style="left:87px;top:494.5px;width:169px;height:21px"><span>2AAAAACH0803</span></div>
<div class="a cell" style="left:257px;top:494.5px;width:188px;height:21px"><span><i class="z">其他钢结构</i></span></div>
<div class="a cell" style="left:625px;top:494.5px;width:69px;height:21px"><span>t</span></div>
<div class="a cell" style="left:695px;top:494.5px;width:106px;height:21px"><span>4.500</span></div>
<div class="a cell" style="left:802px;top:494.5px;width:69px;height:21px"><span><i class="z">钢围栏</i></span></div>
<svg class="a" style="left:35px;top:494px" width="8" height="8"><polygon points="0,0 8,0 0,8.5" fill="#008000"/></svg>
<svg class="a" style="left:695px;top:494px" width="8" height="8"><polygon points="0,0 8,0 0,8.5" fill="#008000"/></svg>
<div class="a cell" style="left:35px;top:516.5px;width:51px;height:21px"><span>27</span></div>
<div class="a cell" style="left:87px;top:516.5px;width:169px;height:21px"><span>2AAAAACH1001</span></div>
<div class="a cell" style="left:257px;top:516.5px;width:188px;height:21px"><span><i class="z">钢轨</i></span></div>
<div class="a cell" style="left:625px;top:516.5px;width:69px;height:21px"><span>t</span></div>
<div class="a cell" style="left:695px;top:516.5px;width:106px;height:21px"><span>43.000</span></div>
<svg class="a" style="left:35px;top:516px" width="8" height="8"><polygon points="0,0 8,0 0,8.5" fill="#008000"/></svg>
<svg class="a" style="left:695px;top:516px" width="8" height="8"><polygon points="0,0 8,0 0,8.5" fill="#008000"/></svg>
<div class="a cell" style="left:35px;top:538.5px;width:51px;height:43px"><span>28</span></div>
<div class="a cell" style="left:87px;top:538.5px;width:169px;height:43px"><span>(<i class="z">补</i>)2AAAAAB01001</span></div>
<div class="a cell" style="left:257px;top:538.5px;width:188px;height:43px"><span><i class="z">全站建筑墙面掺和抗裂</i><br><i class="z">纤维</i></span></div>
<div class="a cell" style="left:625px;top:538.5px;width:69px;height:43px"><span>t</span></div>
<div class="a cell" style="left:695px;top:538.5px;width:106px;height:43px"><span>0.500</span></div>
<svg class="a" style="left:35px;top:538px" width="8" height="8"><polygon points="0,0 8,0 0,8.5" fill="#008000"/></svg>
<svg class="a" style="left:695px;top:538px" width="8" height="8"><polygon points="0,0 8,0 0,8.5" fill="#008000"/></svg>
<div class="a cell" style="left:35px;top:582.5px;width:51px;height:21px"><span>29</span></div>
<div class="a cell" style="left:87px;top:582.5px;width:169px;height:21px"><span>2AAAAACG1301</span></div>
<div class="a cell" style="left:257px;top:582.5px;width:188px;height:21px"><span><i class="z">钢筋调整</i></span></div>
<div class="a cell" style="left:625px;top:582.5px;width:69px;height:21px"><span>t</span></div>
<div class="a cell" style="left:695px;top:582.5px;width:106px;height:21px"><span>122.675</span></div>
<svg class="a" style="left:35px;top:582px" width="8" height="8"><polygon points="0,0 8,0 0,8.5" fill="#008000"/></svg>
<svg class="a" style="left:695px;top:582px" width="8" height="8"><polygon points="0,0 8,0 0,8.5" fill="#008000"/></svg>
<div class="a cell" style="left:35px;top:604.5px;width:51px;height:21px"><span>30</span></div>
<div class="a cell" style="left:87px;top:604.5px;width:169px;height:21px"><span>2AAAAACG1302</span></div>
<div class="a cell" style="left:257px;top:604.5px;width:188px;height:21px"><span><i class="z">钢筋制作安装</i></span></div>
<div class="a cell" style="left:625px;top:604.5px;width:69px;height:21px"><span>t</span></div>
<div class="a cell" style="left:695px;top:604.5px;width:106px;height:21px"><span>632.988</span></div>
<svg class="a" style="left:35px;top:604px" width="8" height="8"><polygon points="0,0 8,0 0,8.5" fill="#008000"/></svg>
<svg class="a" style="left:695px;top:604px" width="8" height="8"><polygon points="0,0 8,0 0,8.5" fill="#008000"/></svg>
<div class="a cell" style="left:87px;top:626.5px;width:169px;height:21px"><span>2AAAAB</span></div>
<div class="a cell" style="left:257px;top:626.5px;width:188px;height:21px"><span>1.1.2 <i class="z">给排水</i></span></div>
<div class="a cell" style="left:35px;top:648.5px;width:51px;height:43px"><span>31</span></div>
<div class="a cell" style="left:87px;top:648.5px;width:169px;height:43px"><span>2AAAABCL0101</span></div>
<div class="a cell" style="left:257px;top:648.5px;width:188px;height:43px"><span><i class="z">给水排水</i></span></div>
<div class="a cell" style="left:625px;top:648.5px;width:69px;height:43px"><span>m³</span></div>
<div class="a cell" style="left:695px;top:648.5px;width:106px;height:43px"><span>31200.500</span></div>
<div class="a cell" style="left:802px;top:648.5px;width:69px;height:43px"><span><i class="z">建筑体</i><br><i class="z">积</i></span></div>
<svg class="a" style="left:35px;top:648px" width="8" height="8"><polygon points="0,0 8,0 0,8.5" fill="#008000"/></svg>
<svg class="a" style="left:695px;top:648px" width="8" height="8"><polygon points="0,0 8,0 0,8.5" fill="#008000"/></svg>
<div class="a cell" style="left:35px;top:692.5px;width:51px;height:21px"><span>32</span></div>
<div class="a cell" style="left:87px;top:692.5px;width:169px;height:21px"><span>2AAAABCL0102</span></div>
<div class="a cell" style="left:257px;top:692.5px;width:188px;height:21px"><span><i class="z">淋浴用电热水器</i></span></div>
<div class="a cell" style="left:446px;top:692.5px;width:178px;height:21px"><span>1.<i class="z">类型、规格</i>:2.5kW</span></div>
<div class="a cell" style="left:625px;top:692.5px;width:69px;height:21px"><span><i class="z">台</i></span></div>
<div class="a cell" style="left:695px;top:692.5px;width:106px;height:21px"><span>2.000</span></div>
<svg class="a" style="left:35px;top:692px" width="8" height="8"><polygon points="0,0 8,0 0,8.5" fill="#008000"/></svg>
<svg class="a" style="left:695px;top:692px" width="8" height="8"><polygon points="0,0 8,0 0,8.5" fill="#008000"/></svg>
<div class="a cell" style="left:87px;top:714.5px;width:169px;height:21px"><span>2AAAAC</span></div>
<div class="a cell" style="left:257px;top:714.5px;width:188px;height:21px"><span>1.1.3 <i class="z">采暖、通风及空调</i></span></div>
<div class="a cell" style="left:35px;top:736.5px;width:51px;height:43px"><span>33</span></div>
<div class="a cell" style="left:87px;top:736.5px;width:169px;height:43px"><span>2AAAACCL0301</span></div>
<div class="a cell" style="left:257px;top:736.5px;width:188px;height:43px"><span><i class="z">通风、空调</i></span></div>
<div class="a cell" style="left:625px;top:736.5px;width:69px;height:43px"><span>m³</span></div>
<div class="a cell" style="left:695px;top:736.5px;width:106px;height:43px"><span>31200.500</span></div>
<div class="a cell" style="left:802px;top:736.5px;width:69px;height:43px"><span><i class="z">建筑体</i><br><i class="z">积</i></span></div>
<svg class="a" style="left:35px;top:736px" width="8" height="8"><polygon points="0,0 8,0 0,8.5" fill="#008000"/></svg>
<svg class="a" style="left:695px;top:736px" width="8" height="8"><polygon points="0,0 8,0 0,8.5" fill="#008000"/></svg>
<div class="a cell" style="left:35px;top:780.5px;width:51px;height:65px"><span>34</span></div>
<div class="a cell" style="left:87px;top:780.5px;width:169px;height:65px"><span>2AAAACCL0302</span></div>
<div class="a cell" style="left:257px;top:780.5px;width:188px;height:65px"><span><i class="z">空调</i></span></div>
<div class="a cell" style="left:446px;top:780.5px;width:178px;height:65px"><span>1.<i class="z">类型、规格</i>:<i class="z">冷暖型立</i><br><i class="z">柜式空调机</i> <i class="z">制冷</i>/<i class="z">热量</i><br>7.1/8.5kW<i class="z">、</i> 3 kW</span></div>
<div class="a cell" style="left:625px;top:780.5px;width:69px;height:65px"><span><i class="z">台</i></span></div>
<div class="a cell" style="left:695px;top:780.5px;width:106px;height:65px"><span>5.000</span></div>
<svg class="a" style="left:35px;top:780px" width="8" height="8"><polygon points="0,0 8,0 0,8.5" fill="#008000"/></svg>
<svg class="a" style="left:695px;top:780px" width="8" height="8"><polygon points="0,0 8,0 0,8.5" fill="#008000"/></svg>
<div class="a cell" style="left:35px;top:846.5px;width:51px;height:65px"><span>35</span></div>
<div class="a cell" style="left:87px;top:846.5px;width:169px;height:65px"><span>2AAAACCL0303</span></div>
<div class="a cell" style="left:257px;top:846.5px;width:188px;height:65px"><span><i class="z">空调</i></span></div>
<div class="a cell" style="left:446px;top:846.5px;width:178px;height:65px"><span>1.<i class="z">类型、规格</i>:<i class="z">壁挂式空</i><br><i class="z">调机</i> <i class="z">制冷</i>/<i class="z">热量</i><br>2.5/3.0kW<i class="z">、</i>1kW</span></div>
<div class="a cell" style="left:625px;top:846.5px;width:69px;height:65px"><span><i class="z">台</i></span></div>
<div class="a cell" style="left:695px;top:846.5px;width:106px;height:65px"><span>8.000</span></div>
<svg class="a" style="left:35px;top:846px" width="8" height="8"><polygon points="0,0 8,0 0,8.5" fill="#008000"/></svg>
<svg class="a" style="left:695px;top:846px" width="8" height="8"><polygon points="0,0 8,0 0,8.5" fill="#008000"/></svg>
<div class="a" style="left:88px;top:230px;width:20px;height:20px;background:#fff;border:1px solid #c8c8c8;border-left:none"></div>
<svg class="a" style="left:90px;top:232px" width="16" height="16" viewBox="0 0 16 16"><polygon points="8,0.3 15.7,8 8,15.7 0.3,8" fill="#eac482"/><rect x="7.1" y="4" width="1.8" height="5.5" fill="#444"/><rect x="7.1" y="10.5" width="1.8" height="1.8" fill="#444"/></svg>
<div class="a" style="left:33px;top:228px;width:55px;height:2px;background:#1e6e41"></div>
<div class="a" style="left:33px;top:228px;width:2px;height:25px;background:#1e6e41"></div>
<div class="a" style="left:86px;top:228px;width:2px;height:21px;background:#1e6e41"></div>
<div class="a" style="left:33px;top:251px;width:51px;height:2px;background:#1e6e41"></div>
<div class="a" style="left:84px;top:249px;width:5px;height:5px;background:#1e6e41;outline:1px solid #fff"></div>
  <div class="a" style="left:1px;top:981px;width:1105px;height:28px;background:#e6e6e6"></div>
  <div class="a" style="left:1px;top:1009px;width:1105px;height:21px;background:#f3f3f3"></div>
<div class="a" style="left:-807px;top:0;width:1920px;height:1030px">
<!-- title bar -->
<svg class="a" style="left:808px;top:0" width="1105" height="65" viewBox="808 0 1105 65" fill="none">
  <!-- save -->
  <path d="M830.5 11.5 H842 L844.2 13.7 V24.5 H830.5 Z" stroke="#fff" stroke-width="1.4"/>
  <rect x="833" y="11.5" width="8" height="4.5" fill="#fff"/>
  <path d="M833.5 24.5 V19.5 H841 V24.5" stroke="#fff" stroke-width="1.4"/>
  <!-- undo/redo faded -->
  <g stroke="#6aa783" stroke-width="1.6" stroke-linecap="round">
    <path d="M860.5 15 H867.5 A4.3 4.3 0 0 1 867.5 23.5 H866"/><path d="M863.5 12 L860.5 15 L863.5 18"/>
    <path d="M880.5 16 L883 18.5 L885.5 16" stroke-width="1"/>
    <path d="M911 15 H904 A4.3 4.3 0 0 0 904 23.5 H905.5"/><path d="M908 12 L911 15 L908 18"/>
    <path d="M918.5 16 L921 18.5 L923.5 16" stroke-width="1"/>
  </g>
  <path d="M940.5 15 H946" stroke="#fff" stroke-width="1.2"/>
  <polygon points="940.3,17.5 946.3,17.5 943.3,21" fill="#fff"/>
  <!-- right controls -->
  <rect x="1744.5" y="11.5" width="12" height="9.5" stroke="#fff" stroke-width="1"/>
  <path d="M1744.5 14 H1756.5 M1750.5 19.5 V15.5 M1748.5 17.5 L1750.5 15.5 L1752.5 17.5" stroke="#fff" stroke-width="0.9"/>
  <path d="M1792 15.5 H1802" stroke="#fff" stroke-width="1.1"/>
  <rect x="1838.5" y="11.5" width="9" height="9.5" stroke="#fff" stroke-width="1.1"/>
  <path d="M1884 11.5 L1893.5 21 M1893.5 11.5 L1884 21" stroke="#fff" stroke-width="1.1"/>
  <!-- share button -->
  <rect x="1836.5" y="38.5" width="63" height="23" stroke="#fff" stroke-width="1"/>
  <path d="M1841.5 49.5 V55.5 H1851.5 V53.5" stroke="#fff" stroke-width="1"/>
  <path d="M1844.5 53.5 Q1845 47.5 1850 47 V45 L1853.5 48.5 L1850 52 V50 Q1847 50 1844.5 53.5 Z" stroke="#fff" stroke-width="1"/>
  <path d="M1890 48.5 L1892.5 51 L1895 48.5" stroke="#fff" stroke-width="1.1"/>
</svg>
<div class="t" style="left:1271px;top:10px;font-size:13px;color:#fff;white-space:pre;letter-spacing:-0.2px">表格提取(1)  [兼容模式]  -  Excel</div>
<div class="a" style="left:1672px;top:8px;width:46px;height:19px;background:#fff;border-radius:2px"></div>
<div class="t" style="left:1683px;top:11px;font-size:12px;color:#217346">登录</div>
<div class="t" style="left:1857px;top:42px;font-size:13px;color:#fff;font-weight:bold">共享</div>
<!-- tabs -->
<div class="a" style="left:869px;top:35px;width:49px;height:30px;background:#f3f3f3"></div>
<div class="t tab" style="left:825px">文件</div>
<div class="t tab" style="left:881px;color:#217346">开始</div>
<div class="t tab" style="left:932px">插入</div>
<div class="t tab" style="left:983px">绘图</div>
<div class="t tab" style="left:1033px">页面布局</div>
<div class="t tab" style="left:1108px">公式</div>
<div class="t tab" style="left:1159px">数据</div>
<div class="t tab" style="left:1210px">审阅</div>
<div class="t tab" style="left:1262px">视图</div>
<div class="t tab" style="left:1313px">帮助</div>
<div class="t tab" style="left:1363px">特色功能</div>
<div class="t tab" style="left:1438px;letter-spacing:0.2px">ACROBAT</div>
<svg class="a" style="left:1524px;top:39px" width="16" height="18" viewBox="0 0 16 18" fill="none" stroke="#fff" stroke-width="1"><path d="M5.5 12.5 Q5.5 10.5 4 9 A5 5 0 1 1 12 9 Q10.5 10.5 10.5 12.5 Z"/><path d="M5.5 14.5 H10.5 M6.5 16.5 H9.5"/></svg>
<div class="t tab" style="left:1552px">操作说明搜索</div>
</div>

<div class="a" style="left:-807px;top:0;width:1920px;height:1030px">
<svg class="a" style="left:808px;top:65px" width="1105" height="95" viewBox="808 65 1105 95" fill="none">
  <!-- group separators -->
  <path d="M911.5 69 V155 M1189.5 69 V155 M1379.5 69 V155 M1480.5 69 V155 M1609.5 69 V155 M1702.5 69 V155 M1800.5 69 V155 M1858.5 69 V155" stroke="#bdbdbd" stroke-width="1"/>
  <path d="M1009.5 108 V129 M1055.5 108 V129 M1140.5 108 V129 M1321.5 75 V130" stroke="#d2d2d2" stroke-width="1"/>
  <!-- launchers -->
  <g stroke="#606060" stroke-width="1">
    <path d="M900.5 147.5 V154.5 H907.5 M900.5 147.5 H904 M907.5 154.5 V151 M902 149 L907 154"/>
    <path d="M1178.5 147.5 V154.5 H1185.5 M1178.5 147.5 H1182 M1185.5 154.5 V151 M1180 149 L1185 154"/>
    <path d="M1368.5 147.5 V154.5 H1375.5 M1368.5 147.5 H1372 M1375.5 154.5 V151 M1370 149 L1375 154"/>
    <path d="M1469.5 147.5 V154.5 H1476.5 M1469.5 147.5 H1473 M1476.5 154.5 V151 M1471 149 L1476 154"/>
  </g>
  <path d="M1893.5 155 L1898.5 150 L1903.5 155" stroke="#505050" stroke-width="1.2"/>
  <!-- clipboard -->
  <rect x="825" y="76" width="24" height="25" rx="1.5" fill="#ebc47f"/>
  <path d="M830 80 H845 V77 H841 A3 3 0 0 0 834 77 H830 Z" fill="#6f6f6f"/>
  <path d="M839.5 84.5 H848.5 L852.5 88.5 V102.5 H839.5 Z" fill="#fff" stroke="#6f6f6f" stroke-width="1"/>
  <path d="M848.5 84.5 V88.5 H852.5" stroke="#6f6f6f" stroke-width="1"/>
  <path d="M836.5 126 L839 128.5 L841.5 126" stroke="#444" stroke-width="1.1"/>
  <!-- scissors -->
  <path d="M864.5 71.5 L871.5 81 M873.5 71.5 L866.5 81" stroke="#6f6f6f" stroke-width="1.6"/>
  <circle cx="865" cy="83.5" r="2.6" stroke="#3e7bbf" stroke-width="1.1"/><circle cx="873" cy="83.5" r="2.6" stroke="#3e7bbf" stroke-width="1.1"/>
  <!-- copy -->
  <path d="M861.5 95.5 H867 L869 97.5 V105.5 H861.5 Z" fill="#fff" stroke="#6f6f6f" stroke-width="1"/>
  <path d="M867.5 99.5 H873.5 L876 102 V109 H867.5 Z" fill="#fff" stroke="#6f6f6f" stroke-width="1"/>
  <path d="M863 99 H866 M863 101.5 H866 M869.5 103.5 H874 M869.5 106 H874" stroke="#3e7bbf" stroke-width="1"/>
  <path d="M888.5 101 L891.5 104 L894.5 101" stroke="#444" stroke-width="1.1"/>
  <!-- format painter -->
  <path d="M869 122 L874.5 116.5 L877 119 L871.5 124.5 Z" fill="#6f6f6f"/>
  <path d="M862 125.5 L868 121.5 L872 125.5 L868 131.5 Z" fill="#ebc47f"/>
  <!-- font boxes -->
  <rect x="920.5" y="76.5" width="171" height="22" fill="#fff" stroke="#8a8a8a" stroke-width="1"/>
  <rect x="1094.5" y="76.5" width="39" height="22" fill="#fff" stroke="#8a8a8a" stroke-width="1"/>
  <polygon points="1082,86 1087,86 1084.5,89" fill="#555"/>
  <polygon points="1124,86 1129,86 1126.5,89" fill="#555"/>
  <polygon points="1150,83 1155,83 1152.5,80" fill="#3e7bbf"/>
  <polygon points="1174,80 1179,80 1176.5,83" fill="#3e7bbf"/>
  <!-- B I U -->
  <path d="M993.5 117 L996.5 120 L999.5 117 M1039.5 117 L1042.5 120 L1045.5 117 M1086 117 L1089 120 L1092 117 M1124.5 117 L1127.5 120 L1130.5 117 M1171 117 L1174 120 L1177 117" stroke="#444" stroke-width="1.1"/>
  <path d="M974 124.5 H983" stroke="#444" stroke-width="1"/>
  <!-- borders icon -->
  <path d="M1018 111.5 H1031 M1018 117.5 H1031 M1018 111.5 V123 M1024.5 111.5 V123 M1031 111.5 V123" stroke="#777" stroke-width="1" stroke-dasharray="1 1"/>
  <path d="M1017.5 123.5 H1031.5" stroke="#555" stroke-width="1.2"/>
  <!-- fill -->
  <path d="M1070 112.5 L1076 118.5 L1071 123 L1065 117.5 Z" fill="#fff" stroke="#555" stroke-width="1"/>
  <path d="M1070.5 110.5 V117" stroke="#555" stroke-width="1"/>
  <path d="M1076.5 115.5 Q1079 117 1077.5 120.5" stroke="#3e7bbf" stroke-width="1.6"/>
  <rect x="1063" y="122.3" width="16" height="3.7" fill="#ffff00"/>
  <rect x="1102" y="122.3" width="16" height="3.7" fill="#ff0000"/>
  <!-- alignment -->
  <rect x="1222.5" y="76.5" width="22" height="22" fill="#c6c6c6" stroke="#8e8e8e" stroke-width="1"/>
  <rect x="1222.5" y="107.5" width="22" height="22" fill="#c6c6c6" stroke="#8e8e8e" stroke-width="1"/>
  <rect x="1326.5" y="76.5" width="22" height="22" fill="#c6c6c6" stroke="#8e8e8e" stroke-width="1"/>
  <g stroke="#666" stroke-width="1">
    <path d="M1202 79.5 H1216 M1203 82.5 H1215 M1202 85.5 H1216"/>
    <path d="M1226 83.5 H1240 M1227 86.5 H1239 M1226 89.5 H1240" stroke="#555"/>
    <path d="M1250 88.5 H1264 M1251 91.5 H1263 M1250 94.5 H1264"/>
    <path d="M1202 113.5 H1216 M1202 116.5 H1212 M1202 119.5 H1216 M1202 122.5 H1212"/>
    <path d="M1226 113.5 H1240 M1228 116.5 H1238 M1226 119.5 H1240 M1228 122.5 H1238" stroke="#555"/>
    <path d="M1250 113.5 H1264 M1254 116.5 H1264 M1250 119.5 H1264 M1254 122.5 H1264"/>
    <path d="M1274 111.5 H1290 M1282 114.5 H1290 M1282 117.5 H1290 M1282 120.5 H1290 M1274 123.5 H1290"/>
    <path d="M1298 111.5 H1314 M1306 114.5 H1314 M1306 117.5 H1314 M1306 120.5 H1314 M1298 123.5 H1314"/>
    <path d="M1280.5 93.5 L1289.5 84" stroke="#555"/>
    <path d="M1295.5 86 L1298 88.5 L1300.5 86 M1356.5 117.5 L1359.5 120.5 L1362.5 117.5 M1413.5 101 L1416.5 104 L1419.5 101" stroke="#444" stroke-width="1.1"/>
  </g>
  <path d="M1275 117.5 H1280 M1277.5 115 L1275 117.5 L1277.5 120 M1305 117.5 H1299 M1302.5 115 L1305 117.5 L1302.5 120" stroke="#3e7bbf" stroke-width="1.6"/>
  <path d="M1287 84.5 L1289.8 83.8 L1289 86.5" stroke="#555" stroke-width="1"/>
  <!-- merge -->
  <rect x="1329.5" y="110.5" width="15" height="14.5" fill="#fff" stroke="#666" stroke-width="1"/>
  <path d="M1329.5 113.5 H1344.5 M1329.5 122 H1344.5 M1337 110.5 V113.5 M1337 122 V125" stroke="#666" stroke-width="1"/>
  <path d="M1332 117.8 H1342 M1333.5 116.3 L1332 117.8 L1333.5 119.3 M1340.5 116.3 L1342 117.8 L1340.5 119.3" stroke="#3e7bbf" stroke-width="1"/>
  <!-- number -->
  <rect x="1388.5" y="68.5" width="84" height="22" fill="#fff" stroke="#8a8a8a" stroke-width="1"/>
  <polygon points="1462.5,78.5 1467.5,78.5 1465,81.5" fill="#555"/>
  <rect x="1391.5" y="94.5" width="15" height="9" stroke="#3e7bbf" stroke-width="1.3"/>
  <circle cx="1398" cy="99" r="2" fill="#3e7bbf"/>
  <ellipse cx="1402" cy="104" rx="4" ry="1.5" fill="#ebc47f"/><ellipse cx="1402" cy="107" rx="4" ry="1.5" fill="#ebc47f"/><ellipse cx="1396" cy="109" rx="3.5" ry="1.5" fill="#ebc47f"/>
  <path d="M1392 121.5 H1396.5 M1394 119.5 L1392 121.5 L1394 123.5" stroke="#3e7bbf" stroke-width="1"/>
  <path d="M1416 128 H1421 M1419 126 L1421 128 L1419 130" stroke="#3e7bbf" stroke-width="1"/>
  <!-- styles icons -->
  <rect x="1492.5" y="71.5" width="12" height="12" fill="#fff" stroke="#777" stroke-width="1"/>
  <rect x="1493" y="72" width="5" height="3.5" fill="#e0553a"/><rect x="1493" y="76" width="8" height="3.5" fill="#3e7bbf"/><rect x="1493" y="80" width="4" height="3.5" fill="#e0553a"/>
  <rect x="1498.5" y="79.5" width="9" height="7" fill="#fff" stroke="#666" stroke-width="1"/>
  <path d="M1501 82 H1505 M1501 84.5 H1505" stroke="#444" stroke-width="0.8"/>
  <rect x="1492.5" y="94.5" width="14" height="12" fill="#fff" stroke="#777" stroke-width="1"/>
  <path d="M1492.5 98.5 H1506.5 M1492.5 102.5 H1506.5 M1497 94.5 V106.5 M1501.5 94.5 V106.5" stroke="#999" stroke-width="0.8"/>
  <rect x="1497.5" y="98.5" width="8" height="7" fill="#c5daf0"/>
  <path d="M1502 108 L1507.5 99.5 L1509 101 L1504 109" fill="#666"/><path d="M1498 110 Q1499 105 1503 106.5 Q1503 110 1498 110 Z" fill="#3e7bbf"/>
  <rect x="1492.5" y="117.5" width="14" height="12" fill="#fff" stroke="#777" stroke-width="1"/>
  <path d="M1492.5 121.5 H1506.5 M1497 117.5 V129.5" stroke="#999" stroke-width="0.8"/>
  <rect x="1497.5" y="121.5" width="8" height="7" fill="#c5daf0"/>
  <path d="M1502 131 L1507.5 122.5 L1509 124 L1504 132" fill="#666"/><path d="M1498 133 Q1499 128 1503 129.5 Q1503 133 1498 133 Z" fill="#3e7bbf"/>
  <path d="M1564 77.5 L1566.8 80.3 L1569.6 77.5 M1588 99.5 L1590.8 102.3 L1593.6 99.5 M1576 122.5 L1578.8 125.3 L1581.6 122.5" stroke="#444" stroke-width="1.1"/>
  <!-- cells icons -->
  <g stroke="#777" stroke-width="1">
    <path d="M1621.5 72.5 H1627.5 V86.5 H1621.5 Z M1621.5 77 H1627.5 M1621.5 81.5 H1627.5"/>
    <path d="M1629 76 H1636.5 V80 H1629 Z"/>
    <path d="M1621.5 94.5 H1627.5 V109 H1621.5 Z M1621.5 99 H1627.5 M1621.5 104 H1627.5"/>
    <path d="M1629 98.5 H1633 V102.5 H1629 Z"/>
    <rect x="1621.5" y="119.5" width="14" height="12.5"/><path d="M1621.5 123.5 H1635.5 M1621.5 127.5 H1635.5 M1626 119.5 V132 M1631 119.5 V132"/>
  </g>
  <path d="M1624 79 H1631.5 M1626 77 L1624 79 L1626 81" stroke="#3e7bbf" stroke-width="1.2"/>
  <path d="M1630.5 99.5 L1636 105 M1636 99.5 L1630.5 105" stroke="#e0553a" stroke-width="1.3"/>
  <rect x="1626" y="123.5" width="5" height="4" fill="#3e7bbf"/>
  <path d="M1621.5 116.5 H1635.5 M1621.5 115 V118 M1635.5 115 V118" stroke="#3e7bbf" stroke-width="1"/>
  <path d="M1679.5 78.5 L1682.5 81.5 L1685.5 78.5 M1679.5 100.5 L1682.5 103.5 L1685.5 100.5 M1669 123 L1672 126 L1675 123" stroke="#444" stroke-width="1.1"/>
  <!-- editing -->
  <path d="M1729 73 H1715 L1722.5 78.5 L1715 84.5 H1729" stroke="#555" stroke-width="2"/>
  <rect x="1715" y="94.5" width="13.5" height="14.5" fill="#fff" stroke="#777" stroke-width="1"/>
  <rect x="1715" y="94" width="13.5" height="3" fill="#777"/>
  <path d="M1721.8 99 V106 M1718.8 103 L1721.8 106 L1724.8 103" stroke="#3e7bbf" stroke-width="1.6"/>
  <path d="M1716.5 127 L1723.5 119.5 L1728.5 124 L1721 131 Z" fill="#e07e95"/><path d="M1716.5 127 L1719.5 124 L1724 128 L1721 131 Z" fill="#f0a9b8"/>
  <text x="1765" y="78" font-family="Liberation Sans" font-size="7" fill="#3e7bbf" text-anchor="middle">A</text>
  <text x="1765" y="86.5" font-family="Liberation Sans" font-size="7" fill="#9b4fbf" text-anchor="middle">Z</text>
  <polygon points="1768,76 1775,76 1772.5,79.5 1772.5,83 1770.5,83 1770.5,79.5" fill="#666"/>
  <circle cx="1769" cy="100.5" r="3.5" stroke="#3e7bbf" stroke-width="1.6"/><path d="M1766.5 103 L1762 107.5" stroke="#3e7bbf" stroke-width="2"/>
  <path d="M1742 77.5 L1745 80.5 L1748 77.5 M1781 77.5 L1784 80.5 L1787 77.5 M1735 100.5 L1738 103.5 L1741 100.5 M1781 100.5 L1784 103.5 L1787 100.5 M1735 123 L1738 126 L1741 123" stroke="#444" stroke-width="1.1"/>
  <circle cx="1829" cy="86" r="5" fill="#cfcfcf"/>
  <text x="0" y="0" font-family="Liberation Sans" font-size="10" fill="#555" transform="translate(1278 93) rotate(-45)">ab</text>
</svg>
<div class="t rl" style="left:825px;top:106px;font-size:12.5px">粘贴</div>
<div class="t rl" style="left:833px;top:143px">剪贴板</div>
<div class="t rl" style="left:1032px;top:143px">字体</div>
<div class="t rl" style="left:1252px;top:143px">对齐方式</div>
<div class="t rl" style="left:1410px;top:143px">数字</div>
<div class="t rl" style="left:1533px;top:143px">样式</div>
<div class="t rl" style="left:1638px;top:143px">单元格</div>
<div class="t rl" style="left:1739px;top:143px">编辑</div>
<div class="t rl" style="left:1811px;top:143px">加载项</div>
<div class="t" style="left:923px;top:80px;font-size:13px;color:#222">Arial</div>
<div class="t" style="left:1097px;top:80px;font-size:13px;color:#222">10</div>
<div class="t" style="left:1141px;top:80px;font-size:14px;color:#555">A</div>
<div class="t" style="left:1166px;top:83px;font-size:11px;color:#555">A</div>
<div class="t" style="left:926px;top:112px;font-size:12.5px;color:#444;font-weight:bold">B</div>
<div class="t" style="left:951px;top:112px;font-size:12.5px;color:#444;font-style:italic;font-family:'Liberation Serif',serif;font-weight:bold">I</div>
<div class="t" style="left:974px;top:112px;font-size:12.5px;color:#444;font-weight:bold">U</div>
<div class="t" style="left:1104px;top:110px;font-size:14px;color:#555">A</div>
<div class="t" style="left:1149px;top:110px;font-size:8px;color:#444">wén</div>
<div class="t" style="left:1151px;top:118px;font-size:8px;color:#3e7bbf">文</div>
<div class="t" style="left:1330px;top:78px;font-size:10px;color:#555;line-height:9px">ab<br>c<span style="color:#3e7bbf;font-size:8px">↵</span></div>
<div class="t" style="left:1391px;top:74px;font-size:12.5px;color:#222">常规</div>
<div class="t" style="left:1432px;top:97px;font-size:15px;color:#555">%</div>
<div class="t" style="left:1459px;top:94px;font-size:15px;color:#555;font-weight:bold">,</div>
<div class="t" style="left:1397px;top:116px;font-size:8.5px;color:#444;line-height:7px">.0<br>.00</div>
<div class="t" style="left:1416px;top:116px;font-size:8.5px;color:#444;line-height:7px">.00<br>&nbsp;&nbsp;.0</div>
<div class="t rb" style="left:1511px;top:74px">条件格式</div>
<div class="t rb" style="left:1511px;top:97px">套用表格格式</div>
<div class="t rb" style="left:1511px;top:120px">单元格样式</div>
<div class="t rb" style="left:1640px;top:74px">插入</div>
<div class="t rb" style="left:1640px;top:97px">删除</div>
<div class="t rb" style="left:1640px;top:120px">格式</div>
<div class="t" style="left:1824px;top:106px;font-size:12px;color:#a6a6a6">加</div>
<div class="t" style="left:1818px;top:120px;font-size:12px;color:#a6a6a6">载项</div>
</div>

<div class="a" style="left:-807px;top:0;width:1920px;height:1030px">
<!-- formula bar -->
<div class="a" style="left:813px;top:170px;width:102px;height:28px;background:#fff;border:1px solid #c6c6c6"></div>
<div class="t" style="left:820px;top:177px;font-size:13px;color:#333">A1</div>
<svg class="a" style="left:808px;top:160px" width="1105" height="48" viewBox="808 160 1105 48" fill="none">
  <polygon points="901,182 908,182 904.5,185.5" fill="#666"/>
  <circle cx="930" cy="180" r="0.9" fill="#999"/><circle cx="930" cy="184" r="0.9" fill="#999"/><circle cx="930" cy="188" r="0.9" fill="#999"/>
  <rect x="945.5" y="170.5" width="109" height="27" fill="#fff" stroke="#c6c6c6" stroke-width="1"/>
  <rect x="1058.5" y="170.5" width="848" height="27" fill="#fff" stroke="#c6c6c6" stroke-width="1"/>
  <path d="M959.5 180 L969 189.5 M969 180 L959.5 189.5" stroke="#c4c4c4" stroke-width="1.4"/>
  <path d="M994.5 185 L998.5 189 L1006 180.5" stroke="#c4c4c4" stroke-width="1.6"/>
  <path d="M1894.5 181.5 L1898 185 L1901.5 181.5" stroke="#666" stroke-width="1.5"/>
</svg>
<div class="t" style="left:1030px;top:177px;font-size:13px;color:#555;font-family:'Liberation Serif',serif;font-style:italic;font-weight:bold">f<span style="font-size:10px">x</span></div>
<div class="t" style="left:1070px;top:177px;font-size:13px;color:#333">18</div>
<!-- vertical scrollbar -->
<div class="a" style="left:1891px;top:208px;width:21px;height:773px;background:#e6e6e6"></div>
<div class="a" style="left:1894px;top:210px;width:14px;height:14px;background:#fff;border:1px solid #a6a6a6"></div>
<svg class="a" style="left:1897px;top:214px" width="8" height="6"><polygon points="0.5,5 7.5,5 4,1" fill="#333"/></svg>
<div class="a" style="left:1894px;top:225px;width:14px;height:741px;background:#fff;border:1px solid #a6a6a6"></div>
<div class="a" style="left:1894px;top:966px;width:14px;height:15px;background:#fff;border:1px solid #a6a6a6"></div>
<svg class="a" style="left:1897px;top:971px" width="8" height="6"><polygon points="0.5,1 7.5,1 4,5" fill="#333"/></svg>
<div class="a" style="left:808px;top:981px;width:1083px;height:1px;background:#ababab"></div>
<!-- sheet tabs -->
<svg class="a" style="left:808px;top:981px" width="1105" height="28" viewBox="808 981 1105 28" fill="none">
  <polygon points="839,990 839,998.5 835,994.2" fill="#bdbdbd"/>
  <polygon points="864,990 864,998.5 868.5,994.2" fill="#217346"/>
  <path d="M908.5 985 V1004.5 M1082.5 985 V1004.5 M1140.5 985 V1004.5 M1198.5 985 V1004.5 M1256.5 985 V1004.5 M1314.5 985 V1004.5 M1372.5 985 V1004.5" stroke="#a0a0a0" stroke-width="1"/>
  <circle cx="1441.8" cy="994.8" r="7.5" stroke="#777" stroke-width="1.1"/>
  <path d="M1441.8 990.5 V999 M1437.5 994.8 H1446" stroke="#555" stroke-width="1.4"/>
  <circle cx="1470.7" cy="990.5" r="0.9" fill="#aaa"/><circle cx="1470.7" cy="994.5" r="0.9" fill="#aaa"/><circle cx="1470.7" cy="998.5" r="0.9" fill="#aaa"/>
  <rect x="1487.5" y="988.5" width="404" height="14" fill="#e6e6e6" stroke="#a6a6a6" stroke-width="1"/>
  <rect x="1502.5" y="989.5" width="331" height="12" fill="#fff" stroke="#a6a6a6" stroke-width="1"/>
  <path d="M1502.5 988.5 V1002.5 M1876.5 988.5 V1002.5" stroke="#a6a6a6" stroke-width="1"/>
  <rect x="1488" y="989" width="14" height="13" fill="#fff"/><rect x="1877" y="989" width="14" height="13" fill="#fff"/>
  <polygon points="1497,991.5 1497,999.5 1493,995.5" fill="#222"/>
  <polygon points="1881.5,991.5 1881.5,999.5 1885.5,995.5" fill="#222"/>
</svg>
<div class="a" style="left:966px;top:981px;width:59px;height:27px;background:#fff"></div>
<div class="a" style="left:966px;top:1004px;width:59px;height:2px;background:#217346"></div>
<div class="t stab" style="left:920px">第1页</div>
<div class="t stab" style="left:977px;color:#217346">第2页</div>
<div class="t stab" style="left:1036px">第3页</div>
<div class="t stab" style="left:1094px">第4页</div>
<div class="t stab" style="left:1152px">第5页</div>
<div class="t stab" style="left:1210px">第6页</div>
<div class="t stab" style="left:1268px">第7页</div>
<div class="t stab" style="left:1326px">第8页</div>
<div class="a" style="left:1383px;top:981px;width:19px;height:27px;overflow:hidden"><div class="t stab" style="left:1px;top:6px">第9</div></div>
<div class="t" style="left:1408px;top:988px;font-size:13px;color:#217346;font-weight:bold;letter-spacing:-0.5px">...</div>
<div class="a" style="left:808px;top:1008px;width:1104px;height:1px;background:#d0d0d0"></div>
<!-- status bar -->
<div class="t" style="left:819px;top:1013px;font-size:12px;color:#333">就绪</div>
<svg class="a" style="left:860px;top:1011px" width="20" height="17" viewBox="0 0 20 17" fill="none" stroke="#555" stroke-width="1.2">
  <path d="M5 2.5 A6 6 0 1 0 11 12" stroke-dasharray="2 1.3"/><path d="M6.5 0.5 V6 M4.5 4 L6.5 6 L8.5 4"/>
  <path d="M11.5 8 A2.3 2.3 0 1 1 14.5 10 Q13.5 10.7 13.5 12" stroke-width="1.6"/><circle cx="13.5" cy="14.5" r="0.8" fill="#555"/>
</svg>
<div class="t" style="left:881px;top:1013px;font-size:12px;color:#333">辅助功能: 不可用</div>
<div class="a" style="left:1596px;top:1010px;width:40px;height:20px;background:#c6c6c6"></div>
<svg class="a" style="left:1596px;top:1009px" width="316" height="21" viewBox="1596 1009 316 21" fill="none">
  <rect x="1609.5" y="1013.5" width="13" height="12" stroke="#555" stroke-width="1"/>
  <path d="M1609.5 1017.5 H1622.5 M1609.5 1021.5 H1622.5 M1613.8 1013.5 V1025.5 M1618.2 1013.5 V1025.5" stroke="#555" stroke-width="1"/>
  <rect x="1649.5" y="1013.5" width="13" height="12" stroke="#555" stroke-width="1"/>
  <rect x="1652.5" y="1016" width="7" height="7" stroke="#555" stroke-width="0.8"/>
  <path d="M1653.5 1018 H1658.5 M1653.5 1020 H1658.5 M1653.5 1022 H1658.5" stroke="#555" stroke-width="0.7"/>
  <path d="M1689.5 1025.5 V1013.5 H1702.5 V1025.5 M1689.5 1020.5 H1695.5 V1013.5" stroke="#555" stroke-width="1"/>
  <path d="M1720 1020 H1728 M1737.5 1020 H1833.5 M1837.5 1020 H1847.5 M1842.5 1015 V1025" stroke="#444" stroke-width="1"/>
  <rect x="1788" y="1014.5" width="4" height="11" fill="#444"/>
  <path d="M1786.5 1015.5 V1024.5" stroke="#444" stroke-width="1"/>
</svg>
<div class="t" style="left:1862px;top:1014px;font-size:12px;color:#333">130%</div>
</div>

  <div class="a" style="left:1105px;top:0;width:1px;height:1030px;background:#1e6b3f"></div>
  <div class="a" style="left:1106px;top:0;width:7px;height:1030px;background:#7a9cbc"></div>
</div>
</body></html>
